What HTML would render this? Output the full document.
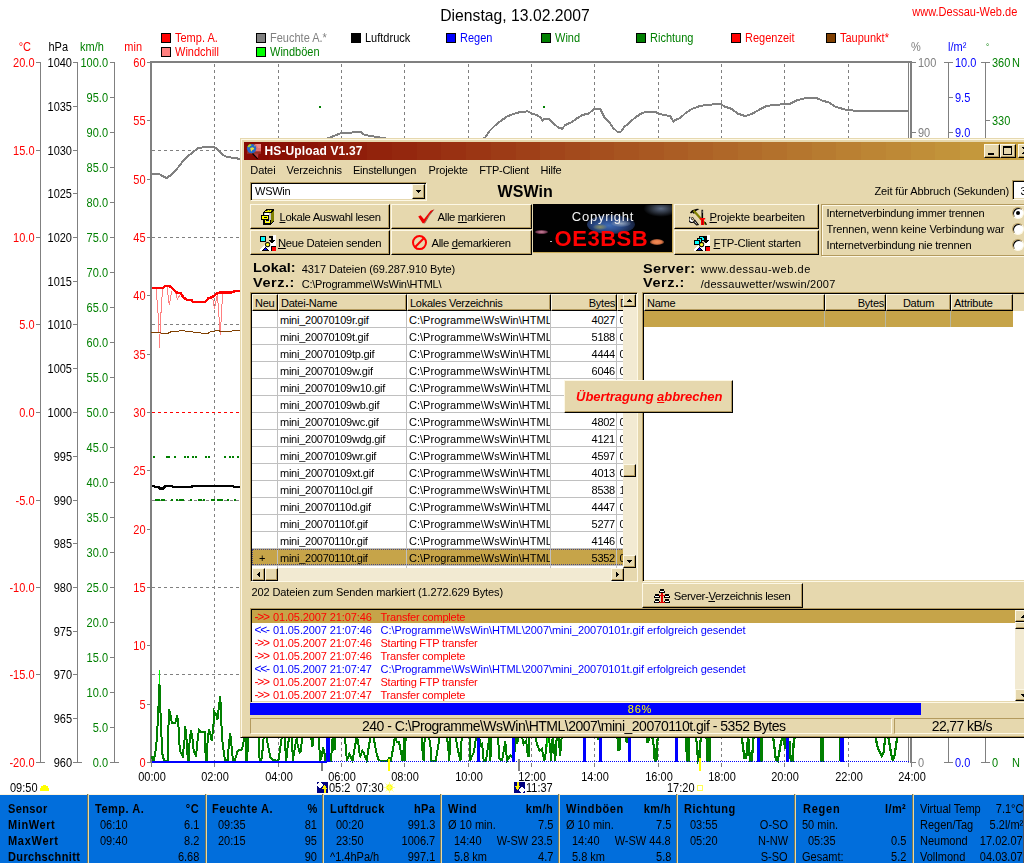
<!DOCTYPE html>
<html><head><meta charset="utf-8"><title>Dienstag, 13.02.2007</title>
<style>
html,body{margin:0;padding:0}
html{background:#fff}
body{width:1024px;height:863px;position:relative;overflow:hidden;background:#fff;font-family:"Liberation Sans",sans-serif;font-size:11px;color:#000}
div,span{position:absolute;box-sizing:border-box;white-space:nowrap}
.ms{font-size:11px;letter-spacing:-0.25px}
.ar{font-size:11px}
.ch{font-size:12.5px;transform:scaleX(0.88)}
.vb{font-size:12.5px;font-weight:bold;transform:scaleX(1.16)}
.b{font-weight:bold}
.th{font-size:11.3px;letter-spacing:-0.3px}
u{text-decoration:underline}
#wrap{left:0;top:0;width:1024px;height:863px;opacity:0.999}
</style></head><body><div id="wrap">
<span class="ch" style="left:414.5px;top:5.5px;width:200px;text-align:center;line-height:20px;font-size:17px;transform:scaleX(0.925);transform-origin:50% 50%">Dienstag, 13.02.2007</span>
<span class="ch" style="right:7px;top:4.5px;line-height:14px;color:#ff0000;transform-origin:100% 50%">www.Dessau-Web.de</span>
<div style="left:161px;top:33px;width:10px;height:10px;background:#ff0000;border:1px solid #000"></div>
<span class="ch" style="left:174.8px;top:30.7px;line-height:14px;color:#ff0000;transform-origin:0 50%">Temp. A.</span>
<div style="left:161px;top:47px;width:10px;height:10px;background:#ff8080;border:1px solid #000"></div>
<span class="ch" style="left:174.8px;top:44.7px;line-height:14px;color:#ff0000;transform-origin:0 50%">Windchill</span>
<div style="left:256px;top:33px;width:10px;height:10px;background:#808080;border:1px solid #000"></div>
<span class="ch" style="left:269.8px;top:30.7px;line-height:14px;color:#808080;transform-origin:0 50%">Feuchte A.*</span>
<div style="left:256px;top:47px;width:10px;height:10px;background:#00ff00;border:1px solid #000"></div>
<span class="ch" style="left:269.8px;top:44.7px;line-height:14px;color:#008000;transform-origin:0 50%">Windb&ouml;en</span>
<div style="left:351px;top:33px;width:10px;height:10px;background:#000000;border:1px solid #000"></div>
<span class="ch" style="left:364.8px;top:30.7px;line-height:14px;color:#000000;transform-origin:0 50%">Luftdruck</span>
<div style="left:446px;top:33px;width:10px;height:10px;background:#0000ff;border:1px solid #000"></div>
<span class="ch" style="left:459.8px;top:30.7px;line-height:14px;color:#0000ff;transform-origin:0 50%">Regen</span>
<div style="left:541px;top:33px;width:10px;height:10px;background:#008000;border:1px solid #000"></div>
<span class="ch" style="left:554.8px;top:30.7px;line-height:14px;color:#008000;transform-origin:0 50%">Wind</span>
<div style="left:636px;top:33px;width:10px;height:10px;background:#008000;border:1px solid #000"></div>
<span class="ch" style="left:649.8px;top:30.7px;line-height:14px;color:#008000;transform-origin:0 50%">Richtung</span>
<div style="left:731px;top:33px;width:10px;height:10px;background:#ff0000;border:1px solid #000"></div>
<span class="ch" style="left:744.8px;top:30.7px;line-height:14px;color:#ff0000;transform-origin:0 50%">Regenzeit</span>
<div style="left:826px;top:33px;width:10px;height:10px;background:#804000;border:1px solid #000"></div>
<span class="ch" style="left:839.8px;top:30.7px;line-height:14px;color:#ff0000;transform-origin:0 50%">Taupunkt*</span>
<svg width="1024" height="863" viewBox="0 0 1024 863" style="position:absolute;left:0;top:0" font-family="Liberation Sans, sans-serif" shape-rendering="crispEdges">
<line x1="214.5" y1="64" x2="214.5" y2="761" stroke="#808080" stroke-width="1" stroke-dasharray="3 3"/>
<line x1="278.5" y1="64" x2="278.5" y2="761" stroke="#808080" stroke-width="1" stroke-dasharray="3 3"/>
<line x1="341.5" y1="64" x2="341.5" y2="761" stroke="#808080" stroke-width="1" stroke-dasharray="3 3"/>
<line x1="404.5" y1="64" x2="404.5" y2="761" stroke="#808080" stroke-width="1" stroke-dasharray="3 3"/>
<line x1="468.5" y1="64" x2="468.5" y2="761" stroke="#808080" stroke-width="1" stroke-dasharray="3 3"/>
<line x1="531.5" y1="64" x2="531.5" y2="761" stroke="#808080" stroke-width="1" stroke-dasharray="3 3"/>
<line x1="594.5" y1="64" x2="594.5" y2="761" stroke="#808080" stroke-width="1" stroke-dasharray="3 3"/>
<line x1="658.5" y1="64" x2="658.5" y2="761" stroke="#808080" stroke-width="1" stroke-dasharray="3 3"/>
<line x1="721.5" y1="64" x2="721.5" y2="761" stroke="#808080" stroke-width="1" stroke-dasharray="3 3"/>
<line x1="784.5" y1="64" x2="784.5" y2="761" stroke="#808080" stroke-width="1" stroke-dasharray="3 3"/>
<line x1="848.5" y1="64" x2="848.5" y2="761" stroke="#808080" stroke-width="1" stroke-dasharray="3 3"/>
<line x1="152" y1="150.5" x2="908" y2="150.5" stroke="#808080" stroke-width="1" stroke-dasharray="3 3"/>
<line x1="152" y1="237.5" x2="908" y2="237.5" stroke="#808080" stroke-width="1" stroke-dasharray="3 3"/>
<line x1="152" y1="324.5" x2="908" y2="324.5" stroke="#808080" stroke-width="1" stroke-dasharray="3 3"/>
<line x1="152" y1="412.5" x2="908" y2="412.5" stroke="#ff0000" stroke-width="1" stroke-dasharray="3 3"/>
<line x1="152" y1="500.5" x2="908" y2="500.5" stroke="#808080" stroke-width="1" stroke-dasharray="3 3"/>
<line x1="152" y1="587.5" x2="908" y2="587.5" stroke="#808080" stroke-width="1" stroke-dasharray="3 3"/>
<line x1="152" y1="674.5" x2="908" y2="674.5" stroke="#808080" stroke-width="1" stroke-dasharray="3 3"/>
<line x1="40.5" y1="62" x2="40.5" y2="763" stroke="#808080" stroke-width="1" />
<line x1="36" y1="62.5" x2="41" y2="62.5" stroke="#808080" stroke-width="1" />
<text transform="translate(34.5 66.9) scale(0.88 1)" fill="#ff0000" text-anchor="end" font-size="12.5" >20.0</text>
<line x1="36" y1="150.5" x2="41" y2="150.5" stroke="#808080" stroke-width="1" />
<text transform="translate(34.5 154.9) scale(0.88 1)" fill="#ff0000" text-anchor="end" font-size="12.5" >15.0</text>
<line x1="36" y1="237.5" x2="41" y2="237.5" stroke="#808080" stroke-width="1" />
<text transform="translate(34.5 241.9) scale(0.88 1)" fill="#ff0000" text-anchor="end" font-size="12.5" >10.0</text>
<line x1="36" y1="324.5" x2="41" y2="324.5" stroke="#808080" stroke-width="1" />
<text transform="translate(34.5 328.9) scale(0.88 1)" fill="#ff0000" text-anchor="end" font-size="12.5" >5.0</text>
<line x1="36" y1="412.5" x2="41" y2="412.5" stroke="#808080" stroke-width="1" />
<text transform="translate(34.5 416.9) scale(0.88 1)" fill="#ff0000" text-anchor="end" font-size="12.5" >0.0</text>
<line x1="36" y1="500.5" x2="41" y2="500.5" stroke="#808080" stroke-width="1" />
<text transform="translate(34.5 504.9) scale(0.88 1)" fill="#ff0000" text-anchor="end" font-size="12.5" >-5.0</text>
<line x1="36" y1="587.5" x2="41" y2="587.5" stroke="#808080" stroke-width="1" />
<text transform="translate(34.5 591.9) scale(0.88 1)" fill="#ff0000" text-anchor="end" font-size="12.5" >-10.0</text>
<line x1="36" y1="674.5" x2="41" y2="674.5" stroke="#808080" stroke-width="1" />
<text transform="translate(34.5 678.9) scale(0.88 1)" fill="#ff0000" text-anchor="end" font-size="12.5" >-15.0</text>
<line x1="36" y1="762.5" x2="45" y2="762.5" stroke="#808080" stroke-width="1" />
<text transform="translate(34.5 766.9) scale(0.88 1)" fill="#ff0000" text-anchor="end" font-size="12.5" >-20.0</text>
<line x1="77.5" y1="62" x2="77.5" y2="763" stroke="#808080" stroke-width="1" />
<line x1="73" y1="62.5" x2="78" y2="62.5" stroke="#808080" stroke-width="1" />
<text transform="translate(72 66.9) scale(0.88 1)" fill="#000000" text-anchor="end" font-size="12.5" >1040</text>
<line x1="73" y1="106.5" x2="78" y2="106.5" stroke="#808080" stroke-width="1" />
<text transform="translate(72 110.9) scale(0.88 1)" fill="#000000" text-anchor="end" font-size="12.5" >1035</text>
<line x1="73" y1="150.5" x2="78" y2="150.5" stroke="#808080" stroke-width="1" />
<text transform="translate(72 154.9) scale(0.88 1)" fill="#000000" text-anchor="end" font-size="12.5" >1030</text>
<line x1="73" y1="193.5" x2="78" y2="193.5" stroke="#808080" stroke-width="1" />
<text transform="translate(72 197.9) scale(0.88 1)" fill="#000000" text-anchor="end" font-size="12.5" >1025</text>
<line x1="73" y1="237.5" x2="78" y2="237.5" stroke="#808080" stroke-width="1" />
<text transform="translate(72 241.9) scale(0.88 1)" fill="#000000" text-anchor="end" font-size="12.5" >1020</text>
<line x1="73" y1="281.5" x2="78" y2="281.5" stroke="#808080" stroke-width="1" />
<text transform="translate(72 285.9) scale(0.88 1)" fill="#000000" text-anchor="end" font-size="12.5" >1015</text>
<line x1="73" y1="324.5" x2="78" y2="324.5" stroke="#808080" stroke-width="1" />
<text transform="translate(72 328.9) scale(0.88 1)" fill="#000000" text-anchor="end" font-size="12.5" >1010</text>
<line x1="73" y1="368.5" x2="78" y2="368.5" stroke="#808080" stroke-width="1" />
<text transform="translate(72 372.9) scale(0.88 1)" fill="#000000" text-anchor="end" font-size="12.5" >1005</text>
<line x1="73" y1="412.5" x2="78" y2="412.5" stroke="#808080" stroke-width="1" />
<text transform="translate(72 416.9) scale(0.88 1)" fill="#000000" text-anchor="end" font-size="12.5" >1000</text>
<line x1="73" y1="456.5" x2="78" y2="456.5" stroke="#808080" stroke-width="1" />
<text transform="translate(72 460.9) scale(0.88 1)" fill="#000000" text-anchor="end" font-size="12.5" >995</text>
<line x1="73" y1="500.5" x2="78" y2="500.5" stroke="#808080" stroke-width="1" />
<text transform="translate(72 504.9) scale(0.88 1)" fill="#000000" text-anchor="end" font-size="12.5" >990</text>
<line x1="73" y1="543.5" x2="78" y2="543.5" stroke="#808080" stroke-width="1" />
<text transform="translate(72 547.9) scale(0.88 1)" fill="#000000" text-anchor="end" font-size="12.5" >985</text>
<line x1="73" y1="587.5" x2="78" y2="587.5" stroke="#808080" stroke-width="1" />
<text transform="translate(72 591.9) scale(0.88 1)" fill="#000000" text-anchor="end" font-size="12.5" >980</text>
<line x1="73" y1="631.5" x2="78" y2="631.5" stroke="#808080" stroke-width="1" />
<text transform="translate(72 635.9) scale(0.88 1)" fill="#000000" text-anchor="end" font-size="12.5" >975</text>
<line x1="73" y1="674.5" x2="78" y2="674.5" stroke="#808080" stroke-width="1" />
<text transform="translate(72 678.9) scale(0.88 1)" fill="#000000" text-anchor="end" font-size="12.5" >970</text>
<line x1="73" y1="718.5" x2="78" y2="718.5" stroke="#808080" stroke-width="1" />
<text transform="translate(72 722.9) scale(0.88 1)" fill="#000000" text-anchor="end" font-size="12.5" >965</text>
<line x1="73" y1="762.5" x2="82" y2="762.5" stroke="#808080" stroke-width="1" />
<text transform="translate(72 766.9) scale(0.88 1)" fill="#000000" text-anchor="end" font-size="12.5" >960</text>
<line x1="114.5" y1="62" x2="114.5" y2="763" stroke="#808080" stroke-width="1" />
<line x1="110" y1="62.5" x2="115" y2="62.5" stroke="#808080" stroke-width="1" />
<text transform="translate(108 66.9) scale(0.88 1)" fill="#008000" text-anchor="end" font-size="12.5" >100.0</text>
<line x1="110" y1="97.5" x2="115" y2="97.5" stroke="#808080" stroke-width="1" />
<text transform="translate(108 101.9) scale(0.88 1)" fill="#008000" text-anchor="end" font-size="12.5" >95.0</text>
<line x1="110" y1="132.5" x2="115" y2="132.5" stroke="#808080" stroke-width="1" />
<text transform="translate(108 136.9) scale(0.88 1)" fill="#008000" text-anchor="end" font-size="12.5" >90.0</text>
<line x1="110" y1="167.5" x2="115" y2="167.5" stroke="#808080" stroke-width="1" />
<text transform="translate(108 171.9) scale(0.88 1)" fill="#008000" text-anchor="end" font-size="12.5" >85.0</text>
<line x1="110" y1="202.5" x2="115" y2="202.5" stroke="#808080" stroke-width="1" />
<text transform="translate(108 206.9) scale(0.88 1)" fill="#008000" text-anchor="end" font-size="12.5" >80.0</text>
<line x1="110" y1="237.5" x2="115" y2="237.5" stroke="#808080" stroke-width="1" />
<text transform="translate(108 241.9) scale(0.88 1)" fill="#008000" text-anchor="end" font-size="12.5" >75.0</text>
<line x1="110" y1="272.5" x2="115" y2="272.5" stroke="#808080" stroke-width="1" />
<text transform="translate(108 276.9) scale(0.88 1)" fill="#008000" text-anchor="end" font-size="12.5" >70.0</text>
<line x1="110" y1="307.5" x2="115" y2="307.5" stroke="#808080" stroke-width="1" />
<text transform="translate(108 311.9) scale(0.88 1)" fill="#008000" text-anchor="end" font-size="12.5" >65.0</text>
<line x1="110" y1="342.5" x2="115" y2="342.5" stroke="#808080" stroke-width="1" />
<text transform="translate(108 346.9) scale(0.88 1)" fill="#008000" text-anchor="end" font-size="12.5" >60.0</text>
<line x1="110" y1="377.5" x2="115" y2="377.5" stroke="#808080" stroke-width="1" />
<text transform="translate(108 381.9) scale(0.88 1)" fill="#008000" text-anchor="end" font-size="12.5" >55.0</text>
<line x1="110" y1="412.5" x2="115" y2="412.5" stroke="#808080" stroke-width="1" />
<text transform="translate(108 416.9) scale(0.88 1)" fill="#008000" text-anchor="end" font-size="12.5" >50.0</text>
<line x1="110" y1="447.5" x2="115" y2="447.5" stroke="#808080" stroke-width="1" />
<text transform="translate(108 451.9) scale(0.88 1)" fill="#008000" text-anchor="end" font-size="12.5" >45.0</text>
<line x1="110" y1="482.5" x2="115" y2="482.5" stroke="#808080" stroke-width="1" />
<text transform="translate(108 486.9) scale(0.88 1)" fill="#008000" text-anchor="end" font-size="12.5" >40.0</text>
<line x1="110" y1="517.5" x2="115" y2="517.5" stroke="#808080" stroke-width="1" />
<text transform="translate(108 521.9) scale(0.88 1)" fill="#008000" text-anchor="end" font-size="12.5" >35.0</text>
<line x1="110" y1="552.5" x2="115" y2="552.5" stroke="#808080" stroke-width="1" />
<text transform="translate(108 556.9) scale(0.88 1)" fill="#008000" text-anchor="end" font-size="12.5" >30.0</text>
<line x1="110" y1="587.5" x2="115" y2="587.5" stroke="#808080" stroke-width="1" />
<text transform="translate(108 591.9) scale(0.88 1)" fill="#008000" text-anchor="end" font-size="12.5" >25.0</text>
<line x1="110" y1="622.5" x2="115" y2="622.5" stroke="#808080" stroke-width="1" />
<text transform="translate(108 626.9) scale(0.88 1)" fill="#008000" text-anchor="end" font-size="12.5" >20.0</text>
<line x1="110" y1="657.5" x2="115" y2="657.5" stroke="#808080" stroke-width="1" />
<text transform="translate(108 661.9) scale(0.88 1)" fill="#008000" text-anchor="end" font-size="12.5" >15.0</text>
<line x1="110" y1="692.5" x2="115" y2="692.5" stroke="#808080" stroke-width="1" />
<text transform="translate(108 696.9) scale(0.88 1)" fill="#008000" text-anchor="end" font-size="12.5" >10.0</text>
<line x1="110" y1="727.5" x2="115" y2="727.5" stroke="#808080" stroke-width="1" />
<text transform="translate(108 731.9) scale(0.88 1)" fill="#008000" text-anchor="end" font-size="12.5" >5.0</text>
<line x1="110" y1="762.5" x2="119" y2="762.5" stroke="#808080" stroke-width="1" />
<text transform="translate(108 766.9) scale(0.88 1)" fill="#008000" text-anchor="end" font-size="12.5" >0.0</text>
<line x1="147" y1="62.5" x2="151" y2="62.5" stroke="#808080" stroke-width="1" />
<text transform="translate(145.5 66.9) scale(0.88 1)" fill="#ff0000" text-anchor="end" font-size="12.5" >60</text>
<line x1="147" y1="120.5" x2="151" y2="120.5" stroke="#808080" stroke-width="1" />
<text transform="translate(145.5 124.9) scale(0.88 1)" fill="#ff0000" text-anchor="end" font-size="12.5" >55</text>
<line x1="147" y1="179.5" x2="151" y2="179.5" stroke="#808080" stroke-width="1" />
<text transform="translate(145.5 183.9) scale(0.88 1)" fill="#ff0000" text-anchor="end" font-size="12.5" >50</text>
<line x1="147" y1="237.5" x2="151" y2="237.5" stroke="#808080" stroke-width="1" />
<text transform="translate(145.5 241.9) scale(0.88 1)" fill="#ff0000" text-anchor="end" font-size="12.5" >45</text>
<line x1="147" y1="295.5" x2="151" y2="295.5" stroke="#808080" stroke-width="1" />
<text transform="translate(145.5 299.9) scale(0.88 1)" fill="#ff0000" text-anchor="end" font-size="12.5" >40</text>
<line x1="147" y1="354.5" x2="151" y2="354.5" stroke="#808080" stroke-width="1" />
<text transform="translate(145.5 358.9) scale(0.88 1)" fill="#ff0000" text-anchor="end" font-size="12.5" >35</text>
<line x1="147" y1="412.5" x2="151" y2="412.5" stroke="#808080" stroke-width="1" />
<text transform="translate(145.5 416.9) scale(0.88 1)" fill="#ff0000" text-anchor="end" font-size="12.5" >30</text>
<line x1="147" y1="470.5" x2="151" y2="470.5" stroke="#808080" stroke-width="1" />
<text transform="translate(145.5 474.9) scale(0.88 1)" fill="#ff0000" text-anchor="end" font-size="12.5" >25</text>
<line x1="147" y1="529.5" x2="151" y2="529.5" stroke="#808080" stroke-width="1" />
<text transform="translate(145.5 533.9) scale(0.88 1)" fill="#ff0000" text-anchor="end" font-size="12.5" >20</text>
<line x1="147" y1="587.5" x2="151" y2="587.5" stroke="#808080" stroke-width="1" />
<text transform="translate(145.5 591.9) scale(0.88 1)" fill="#ff0000" text-anchor="end" font-size="12.5" >15</text>
<line x1="147" y1="645.5" x2="151" y2="645.5" stroke="#808080" stroke-width="1" />
<text transform="translate(145.5 649.9) scale(0.88 1)" fill="#ff0000" text-anchor="end" font-size="12.5" >10</text>
<line x1="147" y1="704.5" x2="151" y2="704.5" stroke="#808080" stroke-width="1" />
<text transform="translate(145.5 708.9) scale(0.88 1)" fill="#ff0000" text-anchor="end" font-size="12.5" >5</text>
<line x1="147" y1="762.5" x2="151" y2="762.5" stroke="#808080" stroke-width="1" />
<text transform="translate(145.5 766.9) scale(0.88 1)" fill="#ff0000" text-anchor="end" font-size="12.5" >0</text>
<rect x="150" y="61" width="2" height="702" fill="#808080" />
<rect x="150" y="61" width="762" height="2" fill="#808080" />
<rect x="908" y="61" width="1" height="702" fill="#808080" />
<rect x="910" y="61" width="2" height="702" fill="#808080" />
<text transform="translate(31 51) scale(0.88 1)" fill="#ff0000" text-anchor="end" font-size="12.5" >&#176;C</text>
<text transform="translate(48.5 51) scale(0.88 1)" fill="#000000" text-anchor="start" font-size="12.5" >hPa</text>
<text transform="translate(80 51) scale(0.88 1)" fill="#008000" text-anchor="start" font-size="12.5" >km/h</text>
<text transform="translate(142 51) scale(0.88 1)" fill="#ff0000" text-anchor="end" font-size="12.5" >min</text>
<line x1="912" y1="62.5" x2="916" y2="62.5" stroke="#808080" stroke-width="1" />
<text transform="translate(918 66.9) scale(0.88 1)" fill="#808080" text-anchor="start" font-size="12.5" >100</text>
<line x1="912" y1="132.5" x2="916" y2="132.5" stroke="#808080" stroke-width="1" />
<text transform="translate(918 136.9) scale(0.88 1)" fill="#808080" text-anchor="start" font-size="12.5" >90</text>
<line x1="912" y1="202.5" x2="916" y2="202.5" stroke="#808080" stroke-width="1" />
<text transform="translate(918 206.9) scale(0.88 1)" fill="#808080" text-anchor="start" font-size="12.5" >80</text>
<line x1="912" y1="272.5" x2="916" y2="272.5" stroke="#808080" stroke-width="1" />
<text transform="translate(918 276.9) scale(0.88 1)" fill="#808080" text-anchor="start" font-size="12.5" >70</text>
<line x1="912" y1="342.5" x2="916" y2="342.5" stroke="#808080" stroke-width="1" />
<text transform="translate(918 346.9) scale(0.88 1)" fill="#808080" text-anchor="start" font-size="12.5" >60</text>
<line x1="912" y1="412.5" x2="916" y2="412.5" stroke="#808080" stroke-width="1" />
<text transform="translate(918 416.9) scale(0.88 1)" fill="#808080" text-anchor="start" font-size="12.5" >50</text>
<line x1="912" y1="482.5" x2="916" y2="482.5" stroke="#808080" stroke-width="1" />
<text transform="translate(918 486.9) scale(0.88 1)" fill="#808080" text-anchor="start" font-size="12.5" >40</text>
<line x1="912" y1="552.5" x2="916" y2="552.5" stroke="#808080" stroke-width="1" />
<text transform="translate(918 556.9) scale(0.88 1)" fill="#808080" text-anchor="start" font-size="12.5" >30</text>
<line x1="912" y1="622.5" x2="916" y2="622.5" stroke="#808080" stroke-width="1" />
<text transform="translate(918 626.9) scale(0.88 1)" fill="#808080" text-anchor="start" font-size="12.5" >20</text>
<line x1="912" y1="692.5" x2="916" y2="692.5" stroke="#808080" stroke-width="1" />
<text transform="translate(918 696.9) scale(0.88 1)" fill="#808080" text-anchor="start" font-size="12.5" >10</text>
<line x1="912" y1="762.5" x2="916" y2="762.5" stroke="#808080" stroke-width="1" />
<text transform="translate(918 766.9) scale(0.88 1)" fill="#808080" text-anchor="start" font-size="12.5" >0</text>
<text transform="translate(911 50.6) scale(0.88 1)" fill="#808080" text-anchor="start" font-size="12.5" >%</text>
<line x1="948.5" y1="62" x2="948.5" y2="763" stroke="#808080" stroke-width="1" />
<line x1="944" y1="62.5" x2="953" y2="62.5" stroke="#808080" stroke-width="1" />
<text transform="translate(955 66.9) scale(0.88 1)" fill="#0000ff" text-anchor="start" font-size="12.5" >10.0</text>
<line x1="948" y1="97.5" x2="953" y2="97.5" stroke="#808080" stroke-width="1" />
<text transform="translate(955 101.9) scale(0.88 1)" fill="#0000ff" text-anchor="start" font-size="12.5" >9.5</text>
<line x1="948" y1="132.5" x2="953" y2="132.5" stroke="#808080" stroke-width="1" />
<text transform="translate(955 136.9) scale(0.88 1)" fill="#0000ff" text-anchor="start" font-size="12.5" >9.0</text>
<line x1="948" y1="167.5" x2="953" y2="167.5" stroke="#808080" stroke-width="1" />
<text transform="translate(955 171.9) scale(0.88 1)" fill="#0000ff" text-anchor="start" font-size="12.5" >8.5</text>
<line x1="948" y1="202.5" x2="953" y2="202.5" stroke="#808080" stroke-width="1" />
<text transform="translate(955 206.9) scale(0.88 1)" fill="#0000ff" text-anchor="start" font-size="12.5" >8.0</text>
<line x1="948" y1="237.5" x2="953" y2="237.5" stroke="#808080" stroke-width="1" />
<text transform="translate(955 241.9) scale(0.88 1)" fill="#0000ff" text-anchor="start" font-size="12.5" >7.5</text>
<line x1="948" y1="272.5" x2="953" y2="272.5" stroke="#808080" stroke-width="1" />
<text transform="translate(955 276.9) scale(0.88 1)" fill="#0000ff" text-anchor="start" font-size="12.5" >7.0</text>
<line x1="948" y1="307.5" x2="953" y2="307.5" stroke="#808080" stroke-width="1" />
<text transform="translate(955 311.9) scale(0.88 1)" fill="#0000ff" text-anchor="start" font-size="12.5" >6.5</text>
<line x1="948" y1="342.5" x2="953" y2="342.5" stroke="#808080" stroke-width="1" />
<text transform="translate(955 346.9) scale(0.88 1)" fill="#0000ff" text-anchor="start" font-size="12.5" >6.0</text>
<line x1="948" y1="377.5" x2="953" y2="377.5" stroke="#808080" stroke-width="1" />
<text transform="translate(955 381.9) scale(0.88 1)" fill="#0000ff" text-anchor="start" font-size="12.5" >5.5</text>
<line x1="948" y1="412.5" x2="953" y2="412.5" stroke="#808080" stroke-width="1" />
<text transform="translate(955 416.9) scale(0.88 1)" fill="#0000ff" text-anchor="start" font-size="12.5" >5.0</text>
<line x1="948" y1="447.5" x2="953" y2="447.5" stroke="#808080" stroke-width="1" />
<text transform="translate(955 451.9) scale(0.88 1)" fill="#0000ff" text-anchor="start" font-size="12.5" >4.5</text>
<line x1="948" y1="482.5" x2="953" y2="482.5" stroke="#808080" stroke-width="1" />
<text transform="translate(955 486.9) scale(0.88 1)" fill="#0000ff" text-anchor="start" font-size="12.5" >4.0</text>
<line x1="948" y1="517.5" x2="953" y2="517.5" stroke="#808080" stroke-width="1" />
<text transform="translate(955 521.9) scale(0.88 1)" fill="#0000ff" text-anchor="start" font-size="12.5" >3.5</text>
<line x1="948" y1="552.5" x2="953" y2="552.5" stroke="#808080" stroke-width="1" />
<text transform="translate(955 556.9) scale(0.88 1)" fill="#0000ff" text-anchor="start" font-size="12.5" >3.0</text>
<line x1="948" y1="587.5" x2="953" y2="587.5" stroke="#808080" stroke-width="1" />
<text transform="translate(955 591.9) scale(0.88 1)" fill="#0000ff" text-anchor="start" font-size="12.5" >2.5</text>
<line x1="948" y1="622.5" x2="953" y2="622.5" stroke="#808080" stroke-width="1" />
<text transform="translate(955 626.9) scale(0.88 1)" fill="#0000ff" text-anchor="start" font-size="12.5" >2.0</text>
<line x1="948" y1="657.5" x2="953" y2="657.5" stroke="#808080" stroke-width="1" />
<text transform="translate(955 661.9) scale(0.88 1)" fill="#0000ff" text-anchor="start" font-size="12.5" >1.5</text>
<line x1="948" y1="692.5" x2="953" y2="692.5" stroke="#808080" stroke-width="1" />
<text transform="translate(955 696.9) scale(0.88 1)" fill="#0000ff" text-anchor="start" font-size="12.5" >1.0</text>
<line x1="948" y1="727.5" x2="953" y2="727.5" stroke="#808080" stroke-width="1" />
<text transform="translate(955 731.9) scale(0.88 1)" fill="#0000ff" text-anchor="start" font-size="12.5" >0.5</text>
<line x1="944" y1="762.5" x2="953" y2="762.5" stroke="#808080" stroke-width="1" />
<text transform="translate(955 766.9) scale(0.88 1)" fill="#0000ff" text-anchor="start" font-size="12.5" >0.0</text>
<text transform="translate(948 50.8) scale(0.88 1)" fill="#0000ff" text-anchor="start" font-size="12.5" >l/m&#178;</text>
<line x1="985.5" y1="62" x2="985.5" y2="763" stroke="#808080" stroke-width="1" />
<line x1="981" y1="62.5" x2="990" y2="62.5" stroke="#808080" stroke-width="1" />
<text transform="translate(992 66.9) scale(0.88 1)" fill="#008000" text-anchor="start" font-size="12.5" >360</text>
<text transform="translate(1012 66.9) scale(0.88 1)" fill="#008000" text-anchor="start" font-size="12.5" >N</text>
<line x1="985" y1="120.5" x2="990" y2="120.5" stroke="#808080" stroke-width="1" />
<text transform="translate(992 124.9) scale(0.88 1)" fill="#008000" text-anchor="start" font-size="12.5" >330</text>
<line x1="985" y1="179.5" x2="990" y2="179.5" stroke="#808080" stroke-width="1" />
<text transform="translate(992 183.9) scale(0.88 1)" fill="#008000" text-anchor="start" font-size="12.5" >300</text>
<line x1="985" y1="237.5" x2="990" y2="237.5" stroke="#808080" stroke-width="1" />
<text transform="translate(992 241.9) scale(0.88 1)" fill="#008000" text-anchor="start" font-size="12.5" >270</text>
<text transform="translate(1012 241.9) scale(0.88 1)" fill="#008000" text-anchor="start" font-size="12.5" >W</text>
<line x1="985" y1="295.5" x2="990" y2="295.5" stroke="#808080" stroke-width="1" />
<text transform="translate(992 299.9) scale(0.88 1)" fill="#008000" text-anchor="start" font-size="12.5" >240</text>
<line x1="985" y1="354.5" x2="990" y2="354.5" stroke="#808080" stroke-width="1" />
<text transform="translate(992 358.9) scale(0.88 1)" fill="#008000" text-anchor="start" font-size="12.5" >210</text>
<line x1="985" y1="412.5" x2="990" y2="412.5" stroke="#808080" stroke-width="1" />
<text transform="translate(992 416.9) scale(0.88 1)" fill="#008000" text-anchor="start" font-size="12.5" >180</text>
<text transform="translate(1012 416.9) scale(0.88 1)" fill="#008000" text-anchor="start" font-size="12.5" >S</text>
<line x1="985" y1="470.5" x2="990" y2="470.5" stroke="#808080" stroke-width="1" />
<text transform="translate(992 474.9) scale(0.88 1)" fill="#008000" text-anchor="start" font-size="12.5" >150</text>
<line x1="985" y1="529.5" x2="990" y2="529.5" stroke="#808080" stroke-width="1" />
<text transform="translate(992 533.9) scale(0.88 1)" fill="#008000" text-anchor="start" font-size="12.5" >120</text>
<line x1="985" y1="587.5" x2="990" y2="587.5" stroke="#808080" stroke-width="1" />
<text transform="translate(992 591.9) scale(0.88 1)" fill="#008000" text-anchor="start" font-size="12.5" >90</text>
<text transform="translate(1012 591.9) scale(0.88 1)" fill="#008000" text-anchor="start" font-size="12.5" >O</text>
<line x1="985" y1="645.5" x2="990" y2="645.5" stroke="#808080" stroke-width="1" />
<text transform="translate(992 649.9) scale(0.88 1)" fill="#008000" text-anchor="start" font-size="12.5" >60</text>
<line x1="985" y1="704.5" x2="990" y2="704.5" stroke="#808080" stroke-width="1" />
<text transform="translate(992 708.9) scale(0.88 1)" fill="#008000" text-anchor="start" font-size="12.5" >30</text>
<line x1="981" y1="762.5" x2="990" y2="762.5" stroke="#808080" stroke-width="1" />
<text transform="translate(992 766.9) scale(0.88 1)" fill="#008000" text-anchor="start" font-size="12.5" >0</text>
<text transform="translate(1012 766.9) scale(0.88 1)" fill="#008000" text-anchor="start" font-size="12.5" >N</text>
<text transform="translate(986 49.5) scale(0.88 1)" fill="#008000" text-anchor="start" font-size="9" >&#176;</text>
<line x1="151.5" y1="763" x2="151.5" y2="767" stroke="#808080" stroke-width="1" />
<text transform="translate(152 781) scale(0.88 1)" fill="#000000" text-anchor="middle" font-size="12.5" >00:00</text>
<line x1="214.5" y1="763" x2="214.5" y2="767" stroke="#808080" stroke-width="1" />
<text transform="translate(215 781) scale(0.88 1)" fill="#000000" text-anchor="middle" font-size="12.5" >02:00</text>
<line x1="278.5" y1="763" x2="278.5" y2="767" stroke="#808080" stroke-width="1" />
<text transform="translate(279 781) scale(0.88 1)" fill="#000000" text-anchor="middle" font-size="12.5" >04:00</text>
<line x1="341.5" y1="763" x2="341.5" y2="767" stroke="#808080" stroke-width="1" />
<text transform="translate(342 781) scale(0.88 1)" fill="#000000" text-anchor="middle" font-size="12.5" >06:00</text>
<line x1="404.5" y1="763" x2="404.5" y2="767" stroke="#808080" stroke-width="1" />
<text transform="translate(405 781) scale(0.88 1)" fill="#000000" text-anchor="middle" font-size="12.5" >08:00</text>
<line x1="468.5" y1="763" x2="468.5" y2="767" stroke="#808080" stroke-width="1" />
<text transform="translate(469 781) scale(0.88 1)" fill="#000000" text-anchor="middle" font-size="12.5" >10:00</text>
<line x1="531.5" y1="763" x2="531.5" y2="767" stroke="#808080" stroke-width="1" />
<text transform="translate(532 781) scale(0.88 1)" fill="#000000" text-anchor="middle" font-size="12.5" >12:00</text>
<line x1="594.5" y1="763" x2="594.5" y2="767" stroke="#808080" stroke-width="1" />
<text transform="translate(595 781) scale(0.88 1)" fill="#000000" text-anchor="middle" font-size="12.5" >14:00</text>
<line x1="658.5" y1="763" x2="658.5" y2="767" stroke="#808080" stroke-width="1" />
<text transform="translate(659 781) scale(0.88 1)" fill="#000000" text-anchor="middle" font-size="12.5" >16:00</text>
<line x1="721.5" y1="763" x2="721.5" y2="767" stroke="#808080" stroke-width="1" />
<text transform="translate(722 781) scale(0.88 1)" fill="#000000" text-anchor="middle" font-size="12.5" >18:00</text>
<line x1="784.5" y1="763" x2="784.5" y2="767" stroke="#808080" stroke-width="1" />
<text transform="translate(785 781) scale(0.88 1)" fill="#000000" text-anchor="middle" font-size="12.5" >20:00</text>
<line x1="848.5" y1="763" x2="848.5" y2="767" stroke="#808080" stroke-width="1" />
<text transform="translate(849 781) scale(0.88 1)" fill="#000000" text-anchor="middle" font-size="12.5" >22:00</text>
<line x1="911.5" y1="763" x2="911.5" y2="767" stroke="#808080" stroke-width="1" />
<text transform="translate(912 781) scale(0.88 1)" fill="#000000" text-anchor="middle" font-size="12.5" >24:00</text>
<polyline points="151.7,173.8 158.5,173.8 166.4,178.1 172.2,174.2 179,166.4 185,158.6 192.7,152.3 198.6,147.9 206.4,146.9 213.2,146.9 217.1,148.8 221,153.1 225,156.3 231.8,157.6 240.6,159 260,158 290,152 315,143 331.4,137 341.2,133.1 360.7,132 364.6,135 382,137.8 400,141 430,146 460,148 478,143 485.5,137 489.8,130.7 494.9,125.6 501.3,120.5 507.6,116.2 515.2,113.4 521.6,111.7 527.9,111.4 531.7,113.4 536.8,115 540.6,117.5 542.4,120.5 544.4,118.5 549,118.5 553.3,123.1 558.4,127.7 562.2,128.7 565.2,125.1 572.4,121.8 577.4,118 582.5,115 588.9,113.4 593.9,109.1 600.3,109.1 604.1,116.7 609.2,121.8 613,127.7 617.6,132 621.1,131.5 624.4,126.9 629.5,122.6 634.6,118 642.2,112.9 648.5,111.7 654.9,111.7 660,114.2 670.1,116 673.4,121.5 676.5,119.3 680.2,118 685.2,113.4 691.6,109.1 700.5,105.8 710.6,104.6 720.8,104 724.6,106.6 732.2,109.1 737.3,113.4 744.9,116 751.3,114.2 758.9,109.9 766.5,106 774.1,104.8 789.3,104 797,100.2 807.1,97.7 816,97.7 822.4,100.7 828.7,102.3 835.1,106.6 845.2,109.6 856.6,110.9 908,110.9" fill="none" stroke="#808080" stroke-width="2" />
<rect x="319" y="106" width="2" height="2" fill="#008000" />
<rect x="543" y="106" width="2" height="2" fill="#008000" />
<polyline points="156.2,289 158.5,319 159.5,347.6 160.6,319 162.5,289" fill="none" stroke="#ff8080" stroke-width="1" />
<polyline points="167,287.4 169.3,304.8 171.7,290.9" fill="none" stroke="#ff8080" stroke-width="1" />
<polyline points="175.7,293.2 177.4,299.5 179.8,294.9" fill="none" stroke="#ff8080" stroke-width="1" />
<polyline points="212.8,299 214.5,308.8 217.4,294.3" fill="none" stroke="#ff8080" stroke-width="1" />
<polyline points="217.4,294.9 220.3,334.9 222.6,293.2" fill="none" stroke="#ff8080" stroke-width="1" />
<polyline points="151.4,332.6 160.6,332.6 161.2,333.5 167.6,333.5 171.7,331.4 178.6,331.4 179.8,330.3 184.4,330.3 185.6,331.4 192.5,331.4 193.7,332.6 200.6,332.6 201.8,333.5 207.6,333.5 211,331.4 214.5,331.4 216.3,330.3 218.6,330.3 219.7,331.4 231.3,331.4 233,330.3 241,330.3" fill="none" stroke="#804000" stroke-width="1" />
<polyline points="152,288 163,288 165.3,285.9 169.3,285.9 172.8,288.5 176.9,292.6 180.9,293.2 183.2,297.2 186.7,299.9 191.3,299.9 193.1,301.9 205.3,301.9 208.2,298.4 212.2,297.2 216.3,293.8 219.2,292.6 231.3,292.6 234.8,291.1 241,291.1" fill="none" stroke="#ff0000" stroke-width="2.4" />
<rect x="153" y="456" width="2" height="2" fill="#008000" />
<rect x="166" y="456" width="4" height="2" fill="#008000" />
<rect x="174" y="456" width="2" height="2" fill="#008000" />
<rect x="184" y="456" width="2" height="2" fill="#008000" />
<rect x="187" y="456" width="2" height="2" fill="#008000" />
<rect x="192" y="456" width="2" height="2" fill="#008000" />
<rect x="195" y="456" width="2" height="2" fill="#008000" />
<rect x="205" y="456" width="2" height="2" fill="#008000" />
<rect x="208" y="456" width="2" height="2" fill="#008000" />
<rect x="224" y="456" width="2" height="2" fill="#008000" />
<rect x="229" y="456" width="2" height="2" fill="#008000" />
<rect x="232" y="456" width="2" height="2" fill="#008000" />
<rect x="237" y="456" width="2" height="2" fill="#008000" />
<rect x="155" y="499" width="5" height="2" fill="#008000" />
<rect x="161" y="499" width="4" height="2" fill="#008000" />
<rect x="171" y="499" width="2" height="2" fill="#008000" />
<rect x="176" y="499" width="2" height="2" fill="#008000" />
<rect x="179" y="499" width="5" height="2" fill="#008000" />
<rect x="190" y="499" width="2" height="2" fill="#008000" />
<rect x="198" y="499" width="4" height="2" fill="#008000" />
<rect x="203" y="499" width="2" height="2" fill="#008000" />
<rect x="211" y="499" width="4" height="2" fill="#008000" />
<rect x="217" y="499" width="6" height="2" fill="#008000" />
<rect x="227" y="499" width="2" height="2" fill="#008000" />
<rect x="234" y="499" width="2" height="2" fill="#008000" />
<polyline points="152,486.2 154.3,486.2 155.4,487.2 158.9,487.2 160,488.4 163,488.4 165.3,486.2 172.2,486.2 172.8,487.2 191.3,487.2 192.5,486.2 233,486.2 234.2,487.2 241,487.2" fill="none" stroke="#000000" stroke-width="2.4" />
<polyline points="151.4,756.5 153.7,760.6 155.4,751.9 156.6,741.5 157.7,722.4 158.7,703.2 159.5,684.1 160.3,707.9 161.2,731 162.4,754.2 164.1,760.6 167.6,760.6 168.2,734.5 169.1,709 170.5,714.8 171.9,722.9 175.4,722.9 177.2,714.8 178.6,727.6 179.8,750.7 182.7,756.5 184.4,741.5 185.3,726.4 186.5,739.2 187.9,760.6 189,760.6 189.6,740.3 191.1,729.9 192.5,739.2 193.7,750.7 196,756.5 197.7,739.2 198.9,729.9 200.6,731.6 204.7,731.6 205.3,747.3 205.8,760.6 207,760.6 207.6,740.3 209,729.3 210.5,734.5 211.6,740.9 213.4,726.4 214.2,711.3 216.3,714.8 217.4,720 219.2,704.4 220.3,696.3 221.2,718.3 222.1,739.2 225,760.6 226.1,760.6 227.9,760 228.7,746.1 230.2,732.8 231.3,743.8 233,760.6 234.8,760.6 237.7,750.7 241.2,749.6 242.2,749 244.6,736 246,736 246.3,760.6 247.1,760.6 248.3,736 258.8,736 259.6,760.6 261.3,760.6 262.9,747.3 263.7,736 266.2,736 270.4,757.3 273,760 277,760.6 278.7,758.9 282,736 284.5,736 286.2,760.6 287.8,745.6 289.5,736 292,736 292.8,760.6 295.3,745.6 297,736 297,742.3 299.5,752.3 301.1,750.6 302,736 311.1,736 312.4,747.3 313.1,736 318.6,736 320.2,760.6 321.9,755.6 323,747.3 324.4,752.3 325.2,760.6 327,760.6 331,760.6 332.7,736 333,736 333,749.8 334.7,749 335.2,736 344.3,736 346,747.3 346.8,760.6 349.3,753.9 352.6,760.6 354.3,750.6 356.8,736 358.4,744 360.1,757.3 362.3,750.6 364.2,753.9 366.7,760.6 369.2,744 370.9,736 373.4,736 375.9,750.6 378.4,759.7 380.9,761 387.5,761 389.2,759 390.8,760.6 393.3,747.3 395,736 396.6,741.5 399.1,742.3 401.6,755.6 402.5,761 404.1,744 404.4,736 404.8,760.6 405.7,736 421.4,736 422.3,749 423.6,760.6 424.8,736 428.9,736 430.6,747.3 431.4,760.6 435.6,760.6 437.2,752.3 439.7,736 446.4,736 448,744 449.2,760.6 450.5,736 455.5,736 458,750.6 460.5,760.6 461.8,736 469.6,736 470.4,760.6 472.1,755.6 473.8,752.3 476.3,736 479,736 480.4,745.6 482.1,744 483.7,760.6 486,760.6 489.5,736 490.4,760.6 491.2,736 497.9,736 499.5,758.9 502,760.6 505.3,741.5 507,760.6 510.3,755.6 512,757.3 514,757 516.1,736 517,744 519,736 521.9,736 523.6,744 526.1,740.6 527.8,755.6 529.4,755.6 529.4,736 535.2,736 536.9,744 539.4,750.6 541.9,749 544.4,760.6 546,750.6 547.2,736 548.5,736 550.2,747.3 551,760.6 552.7,736 555.2,760.6 556.8,736 558.5,736 560.1,755.6 561.8,736" fill="none" stroke="#008000" stroke-width="2" />
<polyline points="598.5,736 598.5,740" fill="none" stroke="#008000" stroke-width="2.2" />
<polyline points="617.5,736 618,750 619.5,749.5 619.8,736" fill="none" stroke="#008000" stroke-width="2.2" />
<polyline points="625.6,736 626.5,741.5 627.8,741.5 627.8,736" fill="none" stroke="#008000" stroke-width="2.2" />
<polyline points="646.4,736 646.9,741.5 648.4,741.5 648.9,736" fill="none" stroke="#008000" stroke-width="2.2" />
<polyline points="652.2,736 653.9,747.3 654.7,760.6 656.4,760.6 656.7,747.3 658,736" fill="none" stroke="#008000" stroke-width="2.2" />
<polyline points="686.3,736 686.8,760.6 688.8,760.6 689.3,736" fill="none" stroke="#008000" stroke-width="2.2" />
<polyline points="695.4,736 697.1,744 697.9,760.6 699.6,757.3 700.1,744 701.2,736" fill="none" stroke="#008000" stroke-width="2.2" />
<polyline points="706.5,736 707.5,760.6 709.5,760.6 710,736" fill="none" stroke="#008000" stroke-width="2.2" />
<polyline points="741.6,736 744.4,758.1 746.2,758.1 748.1,736 749,745 749.9,761 751.8,761 753.6,736" fill="none" stroke="#008000" stroke-width="2.2" />
<polyline points="760.5,736 761,761 762,761 762.3,736" fill="none" stroke="#008000" stroke-width="2.2" />
<polyline points="773.1,736 775.9,760 777.8,761 780.5,745 782.4,736 783.3,736 785.2,748.8 786.5,736" fill="none" stroke="#008000" stroke-width="2.2" />
<polyline points="789.8,741.4 790.7,761 793.2,761 793.5,743.3 795,736" fill="none" stroke="#008000" stroke-width="2.2" />
<polyline points="821,736 821.5,761 822.5,761 823,736" fill="none" stroke="#008000" stroke-width="2.2" />
<polyline points="839.8,736 839.8,761" fill="none" stroke="#008000" stroke-width="2.2" />
<polyline points="875.2,736 878,748.8 881.7,756.3 883.5,752.6 885.4,736" fill="none" stroke="#008000" stroke-width="2.2" />
<polyline points="888.2,736 890.9,752.6 892.8,761 894.7,754.4 897.4,736" fill="none" stroke="#008000" stroke-width="2.2" />
<rect x="617" y="738" width="3" height="13" fill="#008000" />
<rect x="686" y="738" width="3" height="23" fill="#008000" />
<rect x="707" y="738" width="3" height="23" fill="#008000" />
<rect x="820" y="738" width="3" height="23" fill="#008000" />
<rect x="654" y="748" width="3" height="13" fill="#008000" />
<rect x="159" y="670" width="1" height="14" fill="#00ff00" />
<rect x="547" y="738" width="1" height="9" fill="#00ff00" />
<rect x="152" y="761" width="175" height="2" fill="#0000ff" />
<line x1="330" y1="761.5" x2="909" y2="761.5" stroke="#0000ff" stroke-width="1" stroke-dasharray="1 1"/>
<rect x="326" y="738" width="4" height="24" fill="#0000ff" />
<rect x="477" y="738" width="3" height="24" fill="#0000ff" />
<rect x="512" y="738" width="3" height="24" fill="#0000ff" />
<rect x="583" y="738" width="3" height="24" fill="#0000ff" />
<rect x="599" y="738" width="3" height="24" fill="#0000ff" />
<rect x="628" y="738" width="3" height="24" fill="#0000ff" />
<rect x="675" y="738" width="3" height="24" fill="#0000ff" />
<rect x="757" y="738" width="3" height="24" fill="#0000ff" />
<rect x="786" y="738" width="3" height="24" fill="#0000ff" />
<rect x="840" y="738" width="4" height="24" fill="#0000ff" />
<rect x="321" y="763" width="2" height="8" fill="#808080" />
<rect x="518" y="759" width="2" height="12" fill="#808080" />
<rect x="388" y="759" width="2" height="12" fill="#ffff00" />
<rect x="388" y="757" width="2" height="2" fill="#008000" />
<rect x="699" y="758" width="2" height="13" fill="#ffff00" />
</svg>
<span class="ch" style="left:10px;top:780.7px;line-height:14px;;transform-origin:0 50%">09:50</span>
<svg style="position:absolute;left:40px;top:785px" width="9" height="6" shape-rendering="crispEdges"><path d="M0 6 L0 3 L1 3 L1 1 L3 1 L3 0 L6 0 L6 1 L8 1 L8 3 L9 3 L9 6 Z" fill="#ffff00"/></svg>
<svg style="position:absolute;left:317px;top:782px" width="11" height="11" shape-rendering="crispEdges"><rect width="11" height="11" fill="#000080"/><circle cx="3" cy="3" r="2.6" fill="#fff"/><path d="M7.5 3 L4.5 7 L6.5 7 L6.5 11 L8.5 11 L8.5 7 L10.5 7 Z" fill="#ffee00"/></svg>
<span class="ch" style="left:329px;top:780.7px;line-height:14px;;transform-origin:0 50%">05:2</span>
<span class="ch" style="left:356.3px;top:780.7px;line-height:14px;;transform-origin:0 50%">07:30</span>
<svg style="position:absolute;left:383.6px;top:782.3px" width="11" height="11"><circle cx="5.5" cy="5.5" r="3.2" fill="#ffff00"/><g stroke="#ffff70" stroke-width="0.8"><line x1="5.5" y1="0" x2="5.5" y2="11"/><line x1="0" y1="5.5" x2="11" y2="5.5"/><line x1="1.5" y1="1.5" x2="9.5" y2="9.5"/><line x1="9.5" y1="1.5" x2="1.5" y2="9.5"/></g></svg>
<svg style="position:absolute;left:514px;top:782px" width="11" height="11" shape-rendering="crispEdges"><rect width="11" height="11" fill="#000080"/><circle cx="8" cy="8" r="2.6" fill="#fff"/><path d="M3.5 8 L0.5 4 L2.5 4 L2.5 0 L4.5 0 L4.5 4 L6.5 4 Z" fill="#ffee00"/></svg>
<span class="ch" style="left:526px;top:780.7px;line-height:14px;;transform-origin:0 50%">11:37</span>
<span class="ch" style="left:667px;top:780.7px;line-height:14px;;transform-origin:0 50%">17:20</span>
<div style="left:697px;top:785px;width:6px;height:6px;border:1px solid #ffff50"></div>
<div style="left:0px;top:794px;width:1024px;height:1px;background:#FFF4DC"></div>
<div style="left:0px;top:795px;width:1024px;height:68px;background:#006EDC"></div>
<div style="left:87px;top:794px;width:1px;height:69px;background:#7a7a5a"></div>
<div style="left:88px;top:794px;width:1px;height:69px;background:#e8d9a0"></div>
<div style="left:205px;top:794px;width:1px;height:69px;background:#7a7a5a"></div>
<div style="left:206px;top:794px;width:1px;height:69px;background:#e8d9a0"></div>
<div style="left:322px;top:794px;width:1px;height:69px;background:#7a7a5a"></div>
<div style="left:323px;top:794px;width:1px;height:69px;background:#e8d9a0"></div>
<div style="left:440px;top:794px;width:1px;height:69px;background:#7a7a5a"></div>
<div style="left:441px;top:794px;width:1px;height:69px;background:#e8d9a0"></div>
<div style="left:558px;top:794px;width:1px;height:69px;background:#7a7a5a"></div>
<div style="left:559px;top:794px;width:1px;height:69px;background:#e8d9a0"></div>
<div style="left:676px;top:794px;width:1px;height:69px;background:#7a7a5a"></div>
<div style="left:677px;top:794px;width:1px;height:69px;background:#e8d9a0"></div>
<div style="left:794px;top:794px;width:1px;height:69px;background:#7a7a5a"></div>
<div style="left:795px;top:794px;width:1px;height:69px;background:#e8d9a0"></div>
<div style="left:912px;top:794px;width:1px;height:69px;background:#7a7a5a"></div>
<div style="left:913px;top:794px;width:1px;height:69px;background:#e8d9a0"></div>
<div style="left:1023px;top:795px;width:1px;height:68px;background:#4a5060"></div>
<span class="ch b" style="left:8px;top:801.8px;line-height:14px;;letter-spacing:0.435px;transform-origin:0 50%">Sensor</span>
<span class="ch b" style="left:8px;top:817.8px;line-height:14px;;letter-spacing:0.667px;transform-origin:0 50%">MinWert</span>
<span class="ch b" style="left:8px;top:833.8px;line-height:14px;;letter-spacing:0.803px;transform-origin:0 50%">MaxWert</span>
<span class="ch b" style="left:8px;top:849.8px;line-height:14px;;letter-spacing:0.412px;transform-origin:0 50%">Durchschnitt</span>
<span class="ch b" style="left:95px;top:801.8px;line-height:14px;;letter-spacing:0.577px;transform-origin:0 50%">Temp. A.</span>
<span class="ch b" style="right:825px;top:801.8px;line-height:14px;letter-spacing:0.5px;margin-right:-0.5px;transform-origin:100% 50%">&#176;C</span>
<span class="ch" style="left:100px;top:817.8px;line-height:14px;;transform-origin:0 50%">06:10</span>
<span class="ch" style="right:825px;top:817.8px;line-height:14px;;transform-origin:100% 50%">6.1</span>
<span class="ch" style="left:100px;top:833.8px;line-height:14px;;transform-origin:0 50%">09:40</span>
<span class="ch" style="right:825px;top:833.8px;line-height:14px;;transform-origin:100% 50%">8.2</span>
<span class="ch" style="right:825px;top:849.8px;line-height:14px;;transform-origin:100% 50%">6.68</span>
<span class="ch b" style="left:212.2px;top:801.8px;line-height:14px;;letter-spacing:0.610px;transform-origin:0 50%">Feuchte A.</span>
<span class="ch b" style="right:707px;top:801.8px;line-height:14px;letter-spacing:0.5px;margin-right:-0.5px;transform-origin:100% 50%">%</span>
<span class="ch" style="left:218px;top:817.8px;line-height:14px;;transform-origin:0 50%">09:35</span>
<span class="ch" style="right:707px;top:817.8px;line-height:14px;;transform-origin:100% 50%">81</span>
<span class="ch" style="left:218px;top:833.8px;line-height:14px;;transform-origin:0 50%">20:15</span>
<span class="ch" style="right:707px;top:833.8px;line-height:14px;;transform-origin:100% 50%">95</span>
<span class="ch" style="right:707px;top:849.8px;line-height:14px;;transform-origin:100% 50%">90</span>
<span class="ch b" style="left:329.8px;top:801.8px;line-height:14px;;letter-spacing:0.502px;transform-origin:0 50%">Luftdruck</span>
<span class="ch b" style="right:589px;top:801.8px;line-height:14px;letter-spacing:0.5px;margin-right:-0.5px;transform-origin:100% 50%">hPa</span>
<span class="ch" style="left:336px;top:817.8px;line-height:14px;;transform-origin:0 50%">00:20</span>
<span class="ch" style="right:589px;top:817.8px;line-height:14px;;transform-origin:100% 50%">991.3</span>
<span class="ch" style="left:336px;top:833.8px;line-height:14px;;transform-origin:0 50%">23:50</span>
<span class="ch" style="right:589px;top:833.8px;line-height:14px;;transform-origin:100% 50%">1006.7</span>
<span class="ch" style="left:330px;top:849.8px;line-height:14px;;transform-origin:0 50%">^1.4hPa/h</span>
<span class="ch" style="right:589px;top:849.8px;line-height:14px;;transform-origin:100% 50%">997.1</span>
<span class="ch b" style="left:447.7px;top:801.8px;line-height:14px;;letter-spacing:0.715px;transform-origin:0 50%">Wind</span>
<span class="ch b" style="right:471px;top:801.8px;line-height:14px;letter-spacing:0.5px;margin-right:-0.5px;transform-origin:100% 50%">km/h</span>
<span class="ch" style="left:448px;top:817.8px;line-height:14px;;transform-origin:0 50%">&Oslash; 10 min.</span>
<span class="ch" style="right:471px;top:817.8px;line-height:14px;;transform-origin:100% 50%">7.5</span>
<span class="ch" style="left:454px;top:833.8px;line-height:14px;;transform-origin:0 50%">14:40</span>
<span class="ch" style="right:471px;top:833.8px;line-height:14px;;transform-origin:100% 50%">W-SW 23.5</span>
<span class="ch" style="left:454px;top:849.8px;line-height:14px;;transform-origin:0 50%">5.8 km</span>
<span class="ch" style="right:471px;top:849.8px;line-height:14px;;transform-origin:100% 50%">4.7</span>
<span class="ch b" style="left:565.7px;top:801.8px;line-height:14px;;letter-spacing:0.673px;transform-origin:0 50%">Windb&ouml;en</span>
<span class="ch b" style="right:353px;top:801.8px;line-height:14px;letter-spacing:0.5px;margin-right:-0.5px;transform-origin:100% 50%">km/h</span>
<span class="ch" style="left:566px;top:817.8px;line-height:14px;;transform-origin:0 50%">&Oslash; 10 min.</span>
<span class="ch" style="right:353px;top:817.8px;line-height:14px;;transform-origin:100% 50%">7.5</span>
<span class="ch" style="left:572px;top:833.8px;line-height:14px;;transform-origin:0 50%">14:40</span>
<span class="ch" style="right:353px;top:833.8px;line-height:14px;;transform-origin:100% 50%">W-SW 44.8</span>
<span class="ch" style="left:572px;top:849.8px;line-height:14px;;transform-origin:0 50%">5.8 km</span>
<span class="ch" style="right:353px;top:849.8px;line-height:14px;;transform-origin:100% 50%">5.8</span>
<span class="ch b" style="left:684.2px;top:801.8px;line-height:14px;;letter-spacing:0.586px;transform-origin:0 50%">Richtung</span>
<span class="ch" style="left:690px;top:817.8px;line-height:14px;;transform-origin:0 50%">03:55</span>
<span class="ch" style="right:236px;top:817.8px;line-height:14px;;transform-origin:100% 50%">O-SO</span>
<span class="ch" style="left:690px;top:833.8px;line-height:14px;;transform-origin:0 50%">05:20</span>
<span class="ch" style="right:236px;top:833.8px;line-height:14px;;transform-origin:100% 50%">N-NW</span>
<span class="ch" style="right:236px;top:849.8px;line-height:14px;;transform-origin:100% 50%">S-SO</span>
<span class="ch b" style="left:802.5px;top:801.8px;line-height:14px;;letter-spacing:0.882px;transform-origin:0 50%">Regen</span>
<span class="ch b" style="right:118px;top:801.8px;line-height:14px;letter-spacing:0.5px;margin-right:-0.5px;transform-origin:100% 50%">l/m&#178;</span>
<span class="ch" style="left:802px;top:817.8px;line-height:14px;;transform-origin:0 50%">50 min.</span>
<span class="ch" style="left:808px;top:833.8px;line-height:14px;;transform-origin:0 50%">05:35</span>
<span class="ch" style="right:118px;top:833.8px;line-height:14px;;transform-origin:100% 50%">0.5</span>
<span class="ch" style="left:802px;top:849.8px;line-height:14px;;transform-origin:0 50%">Gesamt:</span>
<span class="ch" style="right:118px;top:849.8px;line-height:14px;;transform-origin:100% 50%">5.2</span>
<span class="ch" style="left:920px;top:801.8px;line-height:14px;;transform-origin:0 50%">Virtual Temp</span>
<span class="ch" style="right:1px;top:801.8px;line-height:14px;;transform-origin:100% 50%">7.1&#176;C</span>
<span class="ch" style="left:920px;top:817.8px;line-height:14px;;transform-origin:0 50%">Regen/Tag</span>
<span class="ch" style="right:1px;top:817.8px;line-height:14px;;transform-origin:100% 50%">5.2l/m&#178;</span>
<span class="ch" style="left:920px;top:833.8px;line-height:14px;;transform-origin:0 50%">Neumond</span>
<span class="ch" style="right:1px;top:833.8px;line-height:14px;;transform-origin:100% 50%">17.02.07</span>
<span class="ch" style="left:920px;top:849.8px;line-height:14px;;transform-origin:0 50%">Vollmond</span>
<span class="ch" style="right:1px;top:849.8px;line-height:14px;;transform-origin:100% 50%">04.03.07</span>
<div style="left:240px;top:138px;width:800px;height:600px;background:#E6D8AE;border:1px solid;border-color:#E6D8AE #000000 #000000 #E6D8AE;box-shadow:inset 1px 1px 0 #FDF8E6, inset -1px -1px 0 #B39A5E"></div>
<div style="left:244px;top:142px;width:790px;height:18px;background:linear-gradient(to right,#880a02 0.0px,#880a02 24.7px,#8a0f04 24.7px,#8a0f04 49.4px,#8c1406 49.4px,#8c1406 74.1px,#8e1908 74.1px,#8e1908 98.8px,#901e0a 98.8px,#901e0a 123.4px,#92230c 123.4px,#92230c 148.1px,#94270e 148.1px,#94270e 172.8px,#962c10 172.8px,#962c10 197.5px,#993112 197.5px,#993112 222.2px,#9b3614 222.2px,#9b3614 246.9px,#9d3b16 246.9px,#9d3b16 271.6px,#9f4018 271.6px,#9f4018 296.2px,#a1451a 296.2px,#a1451a 320.9px,#a34a1c 320.9px,#a34a1c 345.6px,#a54f1e 345.6px,#a54f1e 370.3px,#a75420 370.3px,#a75420 395.0px,#a95822 395.0px,#a95822 419.7px,#ab5d24 419.7px,#ab5d24 444.4px,#ad6226 444.4px,#ad6226 469.1px,#af6728 469.1px,#af6728 493.8px,#b16c2a 493.8px,#b16c2a 518.4px,#b3712c 518.4px,#b3712c 543.1px,#b5762e 543.1px,#b5762e 567.8px,#b77b30 567.8px,#b77b30 592.5px,#ba8032 592.5px,#ba8032 617.2px,#bc8534 617.2px,#bc8534 641.9px,#be8936 641.9px,#be8936 666.6px,#c08e38 666.6px,#c08e38 691.2px,#c2933a 691.2px,#c2933a 715.9px,#c4983c 715.9px,#c4983c 740.6px,#c69d3e 740.6px,#c69d3e 765.3px,#c8a240 765.3px,#c8a240 790.0px)"></div>
<svg style="position:absolute;left:246px;top:143px" width="16" height="17"><path d="M5 1 L15 1 L15 10.5 L12.5 10.5 L11.8 15.5 L7 10.5 L1 10.5 L1 8.5 L5 8.5 Z" fill="#b83c3c"/><path d="M9 1 L15 1 L15 8 L9 8 Z" fill="#e07474"/><path d="M10 1 L15 1 L15 5 L12 5 Z" fill="#ee8888"/><path d="M1 9.2 L15 9.2 L15 10.5 L1 10.5 Z" fill="#8a3020"/><path d="M6.5 10.5 L11.6 15.8" stroke="#000" stroke-width="1.1"/><circle cx="5.6" cy="5.6" r="4.7" fill="#2468c8"/><path d="M1.5 3.5 L3 1.6 L5 1.2 L5.5 2.6 L4 3.2 L3 4.6 Z" fill="#b8e020"/><path d="M4.2 5 L6.5 4.2 L8.3 5.2 L7.4 6.8 L6.2 7 L5.8 8.8 L4.8 7.4 Z" fill="#e8e040"/><path d="M8 1.8 L9.4 3 L8.6 3.6 Z" fill="#e8e040"/></svg>
<span class="ar" style="left:264.5px;top:144px;line-height:14px;color:#fff;font-size:12px;font-weight:bold;letter-spacing:0.131px">HS-Upload V1.37</span>
<div style="left:984px;top:144px;width:16px;height:14px;background:#E6D8AE;border:1px solid;border-color:#FDF8E6 #000000 #000000 #FDF8E6;box-shadow:inset -1px -1px 0 #B39A5E;"><div style="left:3px;top:8px;width:6px;height:2px;background:#000"></div></div>
<div style="left:1000px;top:144px;width:16px;height:14px;background:#E6D8AE;border:1px solid;border-color:#FDF8E6 #000000 #000000 #FDF8E6;box-shadow:inset -1px -1px 0 #B39A5E;"><div style="left:2px;top:1px;width:9px;height:9px;border:1px solid #000;border-top-width:2px"></div></div>
<div style="left:1018px;top:144px;width:16px;height:14px;background:#E6D8AE;border:1px solid;border-color:#FDF8E6 #000000 #000000 #FDF8E6;box-shadow:inset -1px -1px 0 #B39A5E;"><svg style="position:absolute;left:3px;top:2px" width="8" height="7" shape-rendering="crispEdges"><path d="M0 0 L2 0 L8 7 L6 7 Z M6 0 L8 0 L2 7 L0 7 Z" fill="#000"/></svg></div>
<span class="ms" style="left:250.3px;top:163px;line-height:14px;;letter-spacing:-0.098px">Datei</span>
<span class="ms" style="left:286.5px;top:163px;line-height:14px;;letter-spacing:-0.070px">Verzeichnis</span>
<span class="ms" style="left:352.9px;top:163px;line-height:14px;;letter-spacing:-0.212px">Einstellungen</span>
<span class="ms" style="left:428.5px;top:163px;line-height:14px;;letter-spacing:-0.132px">Projekte</span>
<span class="ms" style="left:479.2px;top:163px;line-height:14px;;letter-spacing:-0.296px">FTP-Client</span>
<span class="ms" style="left:540.5px;top:163px;line-height:14px;;letter-spacing:-0.203px">Hilfe</span>
<div style="left:250px;top:182px;width:177px;height:19px;background:#fff;border:1px solid;border-color:#B39A5E #FDF8E6 #FDF8E6 #B39A5E;box-shadow:inset 1px 1px 0 #000000, inset -1px -1px 0 #E6D8AE;"></div>
<span class="ms" style="left:255px;top:184.3px;line-height:14px;">WSWin</span>
<div style="left:412px;top:184px;width:13px;height:15px;background:#E6D8AE;border:1px solid;border-color:#FDF8E6 #000000 #000000 #FDF8E6;box-shadow:inset -1px -1px 0 #B39A5E;"><svg width="5" height="3" style="position:absolute;left:50%;top:50%;margin-left:-2.5px;margin-top:-1.5px" shape-rendering="crispEdges"><polygon points="0,0 5,0 2.5,3" fill="#000"/></svg></div>
<span class="ar" style="left:497.5px;top:183px;line-height:18px;font-size:16px;font-weight:bold;letter-spacing:0.109px">WSWin</span>
<span class="ms" style="left:874.5px;top:183.5px;line-height:14px;;letter-spacing:-0.110px">Zeit f&uuml;r Abbruch (Sekunden)</span>
<div style="left:1012px;top:180px;width:28px;height:20px;background:#fff;border:1px solid;border-color:#B39A5E #FDF8E6 #FDF8E6 #B39A5E;box-shadow:inset 1px 1px 0 #000000, inset -1px -1px 0 #E6D8AE;"></div>
<span class="ms" style="left:1020.5px;top:183.5px;line-height:14px;">3</span>
<div style="left:250px;top:204px;width:140px;height:25px;background:#E6D8AE;border:1px solid;border-color:#FDF8E6 #000000 #000000 #FDF8E6;box-shadow:inset -1px -1px 0 #B39A5E;"></div>
<svg style="position:absolute;left:261px;top:208px" width="14" height="18" shape-rendering="crispEdges"><path d="M2 4 L6 1 L13 1 L13 13 L10 17 L2 17 Z" fill="#000"/><path d="M3 4 L6.5 2 L12 2 L9.5 4 Z" fill="#f0f000"/><rect x="6" y="2" width="1" height="1" fill="#808000"/><rect x="8" y="2" width="1" height="1" fill="#808000"/><rect x="10" y="2" width="1" height="1" fill="#808000"/><path d="M10 5 L12.5 2.5 L12.5 12.5 L10 15.5 Z" fill="#808000"/><rect x="3" y="5" width="7" height="11" fill="#c8c8c8"/><rect x="4" y="5" width="4" height="2" fill="#ffffff"/><rect x="0" y="7" width="8" height="5" fill="#000"/><rect x="1" y="8" width="6" height="3" fill="#ffff00"/><rect x="3" y="9" width="3" height="1" fill="#000"/><rect x="3" y="12" width="7" height="4" fill="#000"/><rect x="4" y="12" width="5" height="3" fill="#ffff00"/><rect x="5" y="12" width="3" height="1" fill="#000"/><rect x="5" y="13" width="3" height="1" fill="#c8c8c8"/><path d="M10 16 L12.5 13.5 L13 14.5 L11 17 Z" fill="#e0e0e0"/></svg>
<span class="th" style="left:279.5px;top:209.5px;line-height:14px;;letter-spacing:-0.379px"><u>L</u>okale Auswahl lesen</span>
<div style="left:250px;top:230px;width:140px;height:25px;background:#E6D8AE;border:1px solid;border-color:#FDF8E6 #000000 #000000 #FDF8E6;box-shadow:inset -1px -1px 0 #B39A5E;"></div>
<svg style="position:absolute;left:260px;top:235px" width="16" height="17" shape-rendering="crispEdges"><path d="M13 0 L16 0 L16 16 L0 16 L0 14.5 L7.5 7.5 L13 7.5 Z" fill="#fff"/><rect x="0" y="1" width="6" height="6" fill="#000"/><rect x="1" y="2" width="4" height="4" fill="#00ffff"/><path d="M9 1 L13 1 L13 5 L15.5 5 L12 8.8 L8.5 5 L11 5 L11 2.5 L9 2.5 Z" fill="#000"/><circle cx="7.6" cy="9.6" r="2.6" fill="#000" shape-rendering="auto"/><circle cx="7.6" cy="9.6" r="1.7" fill="#ffff30" shape-rendering="auto"/><path d="M2 16 L5.5 11.5 L9 16 Z" fill="#000"/><path d="M3.3 15.3 L5.5 12.6 L7.7 15.3 Z" fill="#0000f0"/><rect x="10.5" y="11" width="5.5" height="5" fill="#000"/><rect x="11.5" y="12" width="4" height="3.5" fill="#ff0000"/></svg>
<span class="th" style="left:278px;top:235.5px;line-height:14px;;letter-spacing:-0.327px"><u>N</u>eue Dateien senden</span>
<div style="left:391px;top:204px;width:141px;height:25px;background:#E6D8AE;border:1px solid;border-color:#FDF8E6 #000000 #000000 #FDF8E6;box-shadow:inset -1px -1px 0 #B39A5E;"></div>
<svg style="position:absolute;left:417px;top:208px" width="18" height="17"><path d="M1.2 8.4 L3.6 7.2 L7 11.2 L13.6 2.8 L16.8 1.6 L12 7.2 L7.2 15.2 L5.6 15.2 Z" fill="#f00000"/><path d="M16.8 1.6 L12.4 7.4 L7.6 15.4" stroke="#400" stroke-width="0.7" fill="none" opacity=".7"/></svg>
<span class="th" style="left:437.5px;top:209.5px;line-height:14px;;letter-spacing:-0.331px">Alle <u>m</u>arkieren</span>
<div style="left:391px;top:230px;width:141px;height:25px;background:#E6D8AE;border:1px solid;border-color:#FDF8E6 #000000 #000000 #FDF8E6;box-shadow:inset -1px -1px 0 #B39A5E;"></div>
<svg style="position:absolute;left:411px;top:234px" width="18" height="18"><circle cx="8.5" cy="8.6" r="6.5" fill="none" stroke="#ff0000" stroke-width="2"/><line x1="4.2" y1="13" x2="12.8" y2="4.2" stroke="#ff0000" stroke-width="2"/></svg>
<span class="th" style="left:431.5px;top:235.5px;line-height:14px;;letter-spacing:-0.350px">Alle <u>d</u>emarkieren</span>
<div style="left:533px;top:204px;width:140px;height:49px;background:#000;overflow:hidden;border-right:1px solid #C8AA58;border-bottom:1px solid #C8AA58"><div style="left:54px;top:11px;width:48px;height:19px;border-radius:50%;background:radial-gradient(ellipse at 45% 55%,#3f6cb4 0%,#2b4c8a 35%,#1b2b50 62%,rgba(0,0,0,0) 100%)"></div><div style="left:78px;top:16px;width:20px;height:7px;border-radius:50%;background:radial-gradient(ellipse,#93a4bc 0%,rgba(60,80,110,0) 80%)"></div><div style="left:60px;top:20px;width:14px;height:6px;border-radius:50%;background:radial-gradient(ellipse,#8a9060 0%,rgba(60,80,60,0) 80%)"></div><div style="left:110px;top:1px;width:30px;height:12px;background:radial-gradient(ellipse at 60% 30%,#5a6880 0%,rgba(0,0,0,0) 70%)"></div><div style="left:2px;top:25.5px;width:13px;height:4px;border-radius:50%;background:radial-gradient(ellipse,#d890a8 0%,#80405a 50%,rgba(0,0,0,0) 100%)"></div><div style="left:117px;top:34.5px;width:14px;height:6px;border-radius:50%;background:radial-gradient(ellipse,#f49058 0%,#e07848 45%,rgba(120,40,20,0) 100%)"></div><div style="left:17px;top:37px;width:2px;height:1px;background:#bbb"></div></div>
<span class="ar" style="left:503px;top:210.3px;width:200px;text-align:center;line-height:14px;color:#f2f2f2;font-size:13px;letter-spacing:0.75px">Copyright</span>
<span class="ar" style="left:554.5px;top:227px;line-height:24px;color:#ff0000;font-size:22px;font-weight:bold;letter-spacing:0.553px">OE3BSB</span>
<div style="left:674px;top:204px;width:145px;height:25px;background:#E6D8AE;border:1px solid;border-color:#FDF8E6 #000000 #000000 #FDF8E6;box-shadow:inset -1px -1px 0 #B39A5E;"></div>
<svg style="position:absolute;left:689px;top:208px" width="18" height="18"><path d="M1 4.5 L3 2.2 L8 0.8 L10.5 1 L7 3 L5 6 L3.5 4.5 L2 5.5 Z" fill="#000"/><path d="M4.5 2.5 L17 16.5" stroke="#808000" stroke-width="2.2"/><path d="M16 14 L17.4 17" stroke="#000" stroke-width="1"/><rect x="12.5" y="1.8" width="1.6" height="9" fill="#000"/><rect x="13.1" y="2.6" width="0.6" height="2.4" fill="#888"/><path d="M10.8 10 L16.2 10 L16.2 11.6 L15 11.6 L15 17 L12 17 L12 11.6 L10.8 11.6 Z" fill="#ff0000"/><rect x="13.2" y="11.6" width="0.7" height="5.4" fill="#900"/><path d="M1.2 9 A3 3 0 1 0 5.8 12.2 L9.2 16.6 L7.6 17 L4.2 13.6" fill="#fff" stroke="#000" stroke-width="1.1"/><circle cx="3.4" cy="10.6" r="1.1" fill="#e6d8ae" stroke="#000" stroke-width="0.8"/></svg>
<span class="th" style="left:709.5px;top:209.5px;line-height:14px;;letter-spacing:-0.131px"><u>P</u>rojekte bearbeiten</span>
<div style="left:674px;top:230px;width:145px;height:25px;background:#E6D8AE;border:1px solid;border-color:#FDF8E6 #000000 #000000 #FDF8E6;box-shadow:inset -1px -1px 0 #B39A5E;"></div>
<svg style="position:absolute;left:694px;top:235px" width="16" height="17" shape-rendering="crispEdges"><path d="M13 0 L16 0 L16 16 L0 16 L0 14.5 L7.5 7.5 L13 7.5 Z" fill="#fff"/><rect x="8" y="1" width="5" height="5" fill="#000"/><rect x="9" y="2" width="3" height="3" fill="#f0e8c8"/><rect x="5" y="0.5" width="5.5" height="5" fill="#000"/><rect x="6" y="1.5" width="3.5" height="3" fill="#00ffff"/><rect x="2.5" y="2.5" width="5.5" height="5" fill="#000"/><rect x="3.5" y="3.5" width="3.5" height="3" fill="#00ffff"/><rect x="0" y="4.5" width="5.5" height="5" fill="#000"/><rect x="1" y="5.5" width="3.5" height="3" fill="#00ffff"/><path d="M9 1 L13 1 L13 5 L15.5 5 L12 8.8 L8.5 5 L11 5 L11 2.5 L9 2.5 Z" fill="#000"/><circle cx="7.6" cy="9.6" r="2.6" fill="#000" shape-rendering="auto"/><circle cx="7.6" cy="9.6" r="1.7" fill="#ffff30" shape-rendering="auto"/><path d="M2 16 L5.5 11.5 L9 16 Z" fill="#000"/><path d="M3.3 15.3 L5.5 12.6 L7.7 15.3 Z" fill="#0000f0"/><rect x="10.5" y="11" width="5.5" height="5" fill="#000"/><rect x="11.5" y="12" width="4" height="3.5" fill="#ff0000"/></svg>
<span class="th" style="left:713.5px;top:235.5px;line-height:14px;;letter-spacing:-0.248px"><u>F</u>TP-Client starten</span>
<div style="left:821px;top:204px;width:220px;height:52px;border:1px solid #B39A5E;box-shadow:inset 1px 1px 0 #FDF8E6, 1px 1px 0 #FDF8E6"></div>
<span class="ms" style="left:826.5px;top:206px;line-height:14px;;letter-spacing:-0.247px">Internetverbindung immer trennen</span>
<div style="left:1012px;top:206.5px;width:12px;height:12px;border-radius:6px;background:#fff;border:1px solid;border-color:#B39A5E #FDF8E6 #FDF8E6 #B39A5E;box-shadow:inset 1px 1px 0 #000"><div style="left:3px;top:3px;width:4px;height:4px;border-radius:2px;background:#000"></div></div>
<span class="ms" style="left:826.5px;top:222px;line-height:14px;;letter-spacing:-0.121px">Trennen, wenn keine Verbindung war</span>
<div style="left:1012px;top:222.5px;width:12px;height:12px;border-radius:6px;background:#fff;border:1px solid;border-color:#B39A5E #FDF8E6 #FDF8E6 #B39A5E;box-shadow:inset 1px 1px 0 #000"></div>
<span class="ms" style="left:826.5px;top:238px;line-height:14px;;letter-spacing:-0.165px">Internetverbindung nie trennen</span>
<div style="left:1012px;top:238.5px;width:12px;height:12px;border-radius:6px;background:#fff;border:1px solid;border-color:#B39A5E #FDF8E6 #FDF8E6 #B39A5E;box-shadow:inset 1px 1px 0 #000"></div>
<span class="vb" style="left:252.5px;top:261px;line-height:14px;;letter-spacing:-0.029px;transform-origin:0 50%">Lokal:</span>
<span class="vb" style="left:253px;top:275.5px;line-height:14px;;letter-spacing:0.475px;transform-origin:0 50%">Verz.:</span>
<span class="ms" style="left:301.8px;top:262px;line-height:14px;;letter-spacing:-0.085px">4317 Dateien (69.287.910 Byte)</span>
<span class="ms" style="left:301.8px;top:276.5px;line-height:14px;;letter-spacing:-0.249px">C:\Programme\WsWin\HTML\</span>
<span class="vb" style="left:642.5px;top:261.6px;line-height:14px;;letter-spacing:0.284px;transform-origin:0 50%">Server:</span>
<span class="vb" style="left:643px;top:276px;line-height:14px;;letter-spacing:0.475px;transform-origin:0 50%">Verz.:</span>
<span class="ms" style="left:700.8px;top:262px;line-height:14px;;letter-spacing:0.536px">www.dessau-web.de</span>
<span class="ms" style="left:700.8px;top:276.5px;line-height:14px;;letter-spacing:0.237px">/dessauwetter/wswin/2007</span>
<div style="left:250px;top:292px;width:388px;height:290px;background:#E6D8AE;border:1px solid;border-color:#B39A5E #FDF8E6 #FDF8E6 #B39A5E;box-shadow:inset 1px 1px 0 #000000, inset -1px -1px 0 #E6D8AE;"></div>
<div style="left:252px;top:294px;width:372px;height:274px;background:#fff"></div>
<div style="left:252px;top:294px;width:26px;height:17px;background:#E6D8AE;border:1px solid;border-color:#FDF8E6 #000000 #000000 #FDF8E6;box-shadow:inset -1px -1px 0 #B39A5E;"><span class="ms" style="left:2px;top:1.5px;line-height:13px">Neu</span></div>
<div style="left:278px;top:294px;width:129px;height:17px;background:#E6D8AE;border:1px solid;border-color:#FDF8E6 #000000 #000000 #FDF8E6;box-shadow:inset -1px -1px 0 #B39A5E;"><span class="ms" style="left:2px;top:1.5px;line-height:13px">Datei-Name</span></div>
<div style="left:407px;top:294px;width:144px;height:17px;background:#E6D8AE;border:1px solid;border-color:#FDF8E6 #000000 #000000 #FDF8E6;box-shadow:inset -1px -1px 0 #B39A5E;"><span class="ms" style="left:2px;top:1.5px;line-height:13px">Lokales Verzeichnis</span></div>
<div style="left:551px;top:294px;width:66px;height:17px;background:#E6D8AE;border:1px solid;border-color:#FDF8E6 #000000 #000000 #FDF8E6;box-shadow:inset -1px -1px 0 #B39A5E;"><span class="ms" style="right:1px;top:1.5px;line-height:13px">Bytes</span></div>
<div style="left:617px;top:294px;width:6px;height:17px;overflow:hidden"><div style="left:0;top:0;width:24px;height:17px;background:#E6D8AE;border:1px solid;border-color:#FDF8E6 #000000 #000000 #FDF8E6"><span class="ms" style="left:2px;top:1.5px;line-height:13px">D</span></div></div>
<div style="left:252px;top:327px;width:372px;height:1px;background:#C0C0C0"></div>
<span class="ms" style="left:280px;top:312.5px;line-height:14px;">mini_20070109r.gif</span>
<div style="left:409px;top:311px;width:141px;height:16px;overflow:hidden;position:absolute"><span class="ms" style="left:0;top:1.5px;line-height:14px;letter-spacing:0.02px">C:\Programme\WsWin\HTML\</span></div>
<span class="ms" style="right:409px;top:312.5px;line-height:14px;">4027</span>
<span class="ms" style="left:619.5px;top:312.5px;line-height:14px;">0</span>
<div style="left:252px;top:344px;width:372px;height:1px;background:#C0C0C0"></div>
<span class="ms" style="left:280px;top:329.5px;line-height:14px;">mini_20070109t.gif</span>
<div style="left:409px;top:328px;width:141px;height:16px;overflow:hidden;position:absolute"><span class="ms" style="left:0;top:1.5px;line-height:14px;letter-spacing:0.02px">C:\Programme\WsWin\HTML\</span></div>
<span class="ms" style="right:409px;top:329.5px;line-height:14px;">5188</span>
<span class="ms" style="left:619.5px;top:329.5px;line-height:14px;">0</span>
<div style="left:252px;top:361px;width:372px;height:1px;background:#C0C0C0"></div>
<span class="ms" style="left:280px;top:346.5px;line-height:14px;">mini_20070109tp.gif</span>
<div style="left:409px;top:345px;width:141px;height:16px;overflow:hidden;position:absolute"><span class="ms" style="left:0;top:1.5px;line-height:14px;letter-spacing:0.02px">C:\Programme\WsWin\HTML\</span></div>
<span class="ms" style="right:409px;top:346.5px;line-height:14px;">4444</span>
<span class="ms" style="left:619.5px;top:346.5px;line-height:14px;">0</span>
<div style="left:252px;top:378px;width:372px;height:1px;background:#C0C0C0"></div>
<span class="ms" style="left:280px;top:363.5px;line-height:14px;">mini_20070109w.gif</span>
<div style="left:409px;top:362px;width:141px;height:16px;overflow:hidden;position:absolute"><span class="ms" style="left:0;top:1.5px;line-height:14px;letter-spacing:0.02px">C:\Programme\WsWin\HTML\</span></div>
<span class="ms" style="right:409px;top:363.5px;line-height:14px;">6046</span>
<span class="ms" style="left:619.5px;top:363.5px;line-height:14px;">0</span>
<div style="left:252px;top:395px;width:372px;height:1px;background:#C0C0C0"></div>
<span class="ms" style="left:280px;top:380.5px;line-height:14px;">mini_20070109w10.gif</span>
<div style="left:409px;top:379px;width:141px;height:16px;overflow:hidden;position:absolute"><span class="ms" style="left:0;top:1.5px;line-height:14px;letter-spacing:0.02px">C:\Programme\WsWin\HTML\</span></div>
<span class="ms" style="right:409px;top:380.5px;line-height:14px;">4412</span>
<span class="ms" style="left:619.5px;top:380.5px;line-height:14px;">0</span>
<div style="left:252px;top:412px;width:372px;height:1px;background:#C0C0C0"></div>
<span class="ms" style="left:280px;top:397.5px;line-height:14px;">mini_20070109wb.gif</span>
<div style="left:409px;top:396px;width:141px;height:16px;overflow:hidden;position:absolute"><span class="ms" style="left:0;top:1.5px;line-height:14px;letter-spacing:0.02px">C:\Programme\WsWin\HTML\</span></div>
<span class="ms" style="right:409px;top:397.5px;line-height:14px;">4310</span>
<span class="ms" style="left:619.5px;top:397.5px;line-height:14px;">0</span>
<div style="left:252px;top:429px;width:372px;height:1px;background:#C0C0C0"></div>
<span class="ms" style="left:280px;top:414.5px;line-height:14px;">mini_20070109wc.gif</span>
<div style="left:409px;top:413px;width:141px;height:16px;overflow:hidden;position:absolute"><span class="ms" style="left:0;top:1.5px;line-height:14px;letter-spacing:0.02px">C:\Programme\WsWin\HTML\</span></div>
<span class="ms" style="right:409px;top:414.5px;line-height:14px;">4802</span>
<span class="ms" style="left:619.5px;top:414.5px;line-height:14px;">0</span>
<div style="left:252px;top:446px;width:372px;height:1px;background:#C0C0C0"></div>
<span class="ms" style="left:280px;top:431.5px;line-height:14px;">mini_20070109wdg.gif</span>
<div style="left:409px;top:430px;width:141px;height:16px;overflow:hidden;position:absolute"><span class="ms" style="left:0;top:1.5px;line-height:14px;letter-spacing:0.02px">C:\Programme\WsWin\HTML\</span></div>
<span class="ms" style="right:409px;top:431.5px;line-height:14px;">4121</span>
<span class="ms" style="left:619.5px;top:431.5px;line-height:14px;">0</span>
<div style="left:252px;top:463px;width:372px;height:1px;background:#C0C0C0"></div>
<span class="ms" style="left:280px;top:448.5px;line-height:14px;">mini_20070109wr.gif</span>
<div style="left:409px;top:447px;width:141px;height:16px;overflow:hidden;position:absolute"><span class="ms" style="left:0;top:1.5px;line-height:14px;letter-spacing:0.02px">C:\Programme\WsWin\HTML\</span></div>
<span class="ms" style="right:409px;top:448.5px;line-height:14px;">4597</span>
<span class="ms" style="left:619.5px;top:448.5px;line-height:14px;">0</span>
<div style="left:252px;top:480px;width:372px;height:1px;background:#C0C0C0"></div>
<span class="ms" style="left:280px;top:465.5px;line-height:14px;">mini_20070109xt.gif</span>
<div style="left:409px;top:464px;width:141px;height:16px;overflow:hidden;position:absolute"><span class="ms" style="left:0;top:1.5px;line-height:14px;letter-spacing:0.02px">C:\Programme\WsWin\HTML\</span></div>
<span class="ms" style="right:409px;top:465.5px;line-height:14px;">4013</span>
<span class="ms" style="left:619.5px;top:465.5px;line-height:14px;">0</span>
<div style="left:252px;top:497px;width:372px;height:1px;background:#C0C0C0"></div>
<span class="ms" style="left:280px;top:482.5px;line-height:14px;">mini_20070110cl.gif</span>
<div style="left:409px;top:481px;width:141px;height:16px;overflow:hidden;position:absolute"><span class="ms" style="left:0;top:1.5px;line-height:14px;letter-spacing:0.02px">C:\Programme\WsWin\HTML\</span></div>
<span class="ms" style="right:409px;top:482.5px;line-height:14px;">8538</span>
<span class="ms" style="left:619.5px;top:482.5px;line-height:14px;">1</span>
<div style="left:252px;top:514px;width:372px;height:1px;background:#C0C0C0"></div>
<span class="ms" style="left:280px;top:499.5px;line-height:14px;">mini_20070110d.gif</span>
<div style="left:409px;top:498px;width:141px;height:16px;overflow:hidden;position:absolute"><span class="ms" style="left:0;top:1.5px;line-height:14px;letter-spacing:0.02px">C:\Programme\WsWin\HTML\</span></div>
<span class="ms" style="right:409px;top:499.5px;line-height:14px;">4447</span>
<span class="ms" style="left:619.5px;top:499.5px;line-height:14px;">0</span>
<div style="left:252px;top:531px;width:372px;height:1px;background:#C0C0C0"></div>
<span class="ms" style="left:280px;top:516.5px;line-height:14px;">mini_20070110f.gif</span>
<div style="left:409px;top:515px;width:141px;height:16px;overflow:hidden;position:absolute"><span class="ms" style="left:0;top:1.5px;line-height:14px;letter-spacing:0.02px">C:\Programme\WsWin\HTML\</span></div>
<span class="ms" style="right:409px;top:516.5px;line-height:14px;">5277</span>
<span class="ms" style="left:619.5px;top:516.5px;line-height:14px;">0</span>
<div style="left:252px;top:548px;width:372px;height:1px;background:#C0C0C0"></div>
<span class="ms" style="left:280px;top:533.5px;line-height:14px;">mini_20070110r.gif</span>
<div style="left:409px;top:532px;width:141px;height:16px;overflow:hidden;position:absolute"><span class="ms" style="left:0;top:1.5px;line-height:14px;letter-spacing:0.02px">C:\Programme\WsWin\HTML\</span></div>
<span class="ms" style="right:409px;top:533.5px;line-height:14px;">4146</span>
<span class="ms" style="left:619.5px;top:533.5px;line-height:14px;">0</span>
<div style="left:252px;top:549px;width:372px;height:16px;background:#C6A449"></div>
<div style="left:252px;top:565px;width:372px;height:1px;background:#C0C0C0"></div>
<span class="ms" style="left:259px;top:550.5px;line-height:14px;">+</span>
<span class="ms" style="left:280px;top:550.5px;line-height:14px;">mini_20070110t.gif</span>
<div style="left:409px;top:549px;width:141px;height:16px;overflow:hidden;position:absolute"><span class="ms" style="left:0;top:1.5px;line-height:14px;letter-spacing:0.02px">C:\Programme\WsWin\HTML\</span></div>
<span class="ms" style="right:409px;top:550.5px;line-height:14px;">5352</span>
<span class="ms" style="left:619.5px;top:550.5px;line-height:14px;">0</span>
<div style="left:277px;top:311px;width:1px;height:257px;background:#C0C0C0"></div>
<div style="left:406px;top:311px;width:1px;height:257px;background:#C0C0C0"></div>
<div style="left:550px;top:311px;width:1px;height:257px;background:#C0C0C0"></div>
<div style="left:616px;top:311px;width:1px;height:257px;background:#C0C0C0"></div>
<div style="left:252px;top:549px;width:372px;height:16px;border:1px dotted #4a4a80"></div>
<div style="left:623px;top:294px;width:14px;height:274px;background:#F2EAD2"></div>
<div style="left:623px;top:294px;width:13px;height:13px;background:#E6D8AE;border:1px solid;border-color:#FDF8E6 #000000 #000000 #FDF8E6;box-shadow:inset -1px -1px 0 #B39A5E;"><svg width="5" height="3" style="position:absolute;left:50%;top:50%;margin-left:-2.5px;margin-top:-1.5px" shape-rendering="crispEdges"><polygon points="0,3 5,3 2.5,0" fill="#000"/></svg></div>
<div style="left:623px;top:464px;width:13px;height:13px;background:#E6D8AE;border:1px solid;border-color:#FDF8E6 #000000 #000000 #FDF8E6;box-shadow:inset -1px -1px 0 #B39A5E;"></div>
<div style="left:623px;top:555px;width:13px;height:13px;background:#E6D8AE;border:1px solid;border-color:#FDF8E6 #000000 #000000 #FDF8E6;box-shadow:inset -1px -1px 0 #B39A5E;"><svg width="5" height="3" style="position:absolute;left:50%;top:50%;margin-left:-2.5px;margin-top:-1.5px" shape-rendering="crispEdges"><polygon points="0,0 5,0 2.5,3" fill="#000"/></svg></div>
<div style="left:252px;top:568px;width:372px;height:13px;background:#F2EAD2"></div>
<div style="left:252px;top:568px;width:13px;height:13px;background:#E6D8AE;border:1px solid;border-color:#FDF8E6 #000000 #000000 #FDF8E6;box-shadow:inset -1px -1px 0 #B39A5E;"><svg width="3" height="5" style="position:absolute;left:50%;top:50%;margin-left:-1.5px;margin-top:-2.5px" shape-rendering="crispEdges"><polygon points="3,0 3,5 0,2.5" fill="#000"/></svg></div>
<div style="left:265px;top:568px;width:13px;height:13px;background:#E6D8AE;border:1px solid;border-color:#FDF8E6 #000000 #000000 #FDF8E6;box-shadow:inset -1px -1px 0 #B39A5E;"></div>
<div style="left:611px;top:568px;width:13px;height:13px;background:#E6D8AE;border:1px solid;border-color:#FDF8E6 #000000 #000000 #FDF8E6;box-shadow:inset -1px -1px 0 #B39A5E;"><svg width="3" height="5" style="position:absolute;left:50%;top:50%;margin-left:-1.5px;margin-top:-2.5px" shape-rendering="crispEdges"><polygon points="0,0 0,5 3,2.5" fill="#000"/></svg></div>
<div style="left:624px;top:568px;width:13px;height:13px;background:#E6D8AE"></div>
<span class="ms" style="left:251.5px;top:585px;line-height:14px;;letter-spacing:-0.108px">202 Dateien zum Senden markiert (1.272.629 Bytes)</span>
<div style="left:642px;top:292px;width:398px;height:290px;background:#fff;border:1px solid;border-color:#B39A5E #FDF8E6 #FDF8E6 #B39A5E;box-shadow:inset 1px 1px 0 #000000, inset -1px -1px 0 #E6D8AE;"></div>
<div style="left:644px;top:294px;width:181px;height:17px;background:#E6D8AE;border:1px solid;border-color:#FDF8E6 #000000 #000000 #FDF8E6;box-shadow:inset -1px -1px 0 #B39A5E;"><span class="ms" style="left:2px;top:1.5px;line-height:13px">Name</span></div>
<div style="left:825px;top:294px;width:61px;height:17px;background:#E6D8AE;border:1px solid;border-color:#FDF8E6 #000000 #000000 #FDF8E6;box-shadow:inset -1px -1px 0 #B39A5E;"><span class="ms" style="right:1px;top:1.5px;line-height:13px">Bytes</span></div>
<div style="left:886px;top:294px;width:65px;height:17px;background:#E6D8AE;border:1px solid;border-color:#FDF8E6 #000000 #000000 #FDF8E6;box-shadow:inset -1px -1px 0 #B39A5E;"><span class="ms" style="left:0;right:0;text-align:center;top:1.5px;line-height:13px">Datum</span></div>
<div style="left:951px;top:294px;width:62px;height:17px;background:#E6D8AE;border:1px solid;border-color:#FDF8E6 #000000 #000000 #FDF8E6;box-shadow:inset -1px -1px 0 #B39A5E;"><span class="ms" style="left:2px;top:1.5px;line-height:13px">Attribute</span></div>
<div style="left:1013px;top:294px;width:20px;height:17px;background:#E6D8AE"></div>
<div style="left:644px;top:311px;width:369px;height:16px;background:#C6A449"></div>
<div style="left:824px;top:311px;width:1px;height:16px;background:#b8b8a0"></div>
<div style="left:885px;top:311px;width:1px;height:16px;background:#b8b8a0"></div>
<div style="left:950px;top:311px;width:1px;height:16px;background:#b8b8a0"></div>
<div style="left:564px;top:380px;width:169px;height:33px;background:#E6D8AE;border:1px solid;border-color:#FDF8E6 #000000 #000000 #FDF8E6;box-shadow:inset -1px -1px 0 #B39A5E;"></div>
<span class="ar" style="left:576.1px;top:388.5px;line-height:16px;color:#ff0000;font-size:13px;font-weight:bold;font-style:italic;letter-spacing:-0.051px">&Uuml;bertragung <u>a</u>bbrechen</span>
<div style="left:642px;top:583px;width:161px;height:25px;background:#E6D8AE;border:1px solid;border-color:#FDF8E6 #000000 #000000 #FDF8E6;box-shadow:inset -1px -1px 0 #B39A5E;"></div>
<svg style="position:absolute;left:654px;top:589px" width="16" height="16" shape-rendering="crispEdges"><rect x="6" y="0" width="4" height="2" fill="#000"/><rect x="5" y="2" width="6" height="2" fill="#000"/><rect x="6" y="2" width="4" height="1" fill="#fff"/><rect x="1" y="5" width="4" height="2" fill="#000"/><rect x="0" y="7" width="6" height="2" fill="#000"/><rect x="1" y="7" width="4" height="1" fill="#fff"/><rect x="11" y="5" width="4" height="2" fill="#000"/><rect x="10" y="7" width="6" height="2" fill="#000"/><rect x="11" y="7" width="4" height="1" fill="#fff"/><rect x="1" y="10" width="4" height="2" fill="#000"/><rect x="0" y="12" width="6" height="2" fill="#000"/><rect x="1" y="12" width="4" height="1" fill="#fff"/><rect x="11" y="10" width="4" height="2" fill="#000"/><rect x="10" y="12" width="6" height="2" fill="#000"/><rect x="11" y="12" width="4" height="1" fill="#fff"/><rect x="7" y="4" width="2" height="10" fill="#e00000"/><rect x="5" y="6" width="6" height="1" fill="#e00000"/><rect x="5" y="13" width="6" height="1" fill="#e00000"/></svg>
<span class="th" style="left:673.8px;top:588.5px;line-height:14px;;letter-spacing:-0.345px">Server-<u>V</u>erzeichnis lesen</span>
<div style="left:250px;top:608px;width:790px;height:95px;background:#fff;border:1px solid;border-color:#B39A5E #FDF8E6 #FDF8E6 #B39A5E;box-shadow:inset 1px 1px 0 #000000, inset -1px -1px 0 #E6D8AE;"></div>
<div style="left:252px;top:610px;width:763px;height:13px;background:#C6A449"></div>
<span class="ms" style="left:254.5px;top:609.8px;line-height:14px;color:#ff0000;font-size:12px;letter-spacing:-1.272px">-&gt;&gt;</span>
<span class="ms" style="left:272.9px;top:609.5px;line-height:14px;color:#ff0000;letter-spacing:-0.107px">01.05.2007 21:07:46</span>
<span class="ms" style="left:380.5px;top:609.5px;line-height:14px;color:#ff0000;letter-spacing:-0.203px">Transfer complete</span>
<span class="ms" style="left:254.5px;top:622.8px;line-height:14px;color:#0000ff;font-size:12px;letter-spacing:-1.272px">&lt;&lt;-</span>
<span class="ms" style="left:272.9px;top:622.5px;line-height:14px;color:#0000ff;letter-spacing:-0.107px">01.05.2007 21:07:46</span>
<span class="ms" style="left:380.5px;top:622.5px;line-height:14px;color:#0000ff;letter-spacing:-0.053px">C:\Programme\WsWin\HTML\2007\mini_20070101r.gif erfolgreich gesendet</span>
<span class="ms" style="left:254.5px;top:635.8px;line-height:14px;color:#ff0000;font-size:12px;letter-spacing:-1.272px">-&gt;&gt;</span>
<span class="ms" style="left:272.9px;top:635.5px;line-height:14px;color:#ff0000;letter-spacing:-0.107px">01.05.2007 21:07:46</span>
<span class="ms" style="left:380.5px;top:635.5px;line-height:14px;color:#ff0000;letter-spacing:-0.233px">Starting FTP transfer</span>
<span class="ms" style="left:254.5px;top:648.8px;line-height:14px;color:#ff0000;font-size:12px;letter-spacing:-1.272px">-&gt;&gt;</span>
<span class="ms" style="left:272.9px;top:648.5px;line-height:14px;color:#ff0000;letter-spacing:-0.107px">01.05.2007 21:07:46</span>
<span class="ms" style="left:380.5px;top:648.5px;line-height:14px;color:#ff0000;letter-spacing:-0.203px">Transfer complete</span>
<span class="ms" style="left:254.5px;top:661.8px;line-height:14px;color:#0000ff;font-size:12px;letter-spacing:-1.272px">&lt;&lt;-</span>
<span class="ms" style="left:272.9px;top:661.5px;line-height:14px;color:#0000ff;letter-spacing:-0.107px">01.05.2007 21:07:47</span>
<span class="ms" style="left:380.5px;top:661.5px;line-height:14px;color:#0000ff;letter-spacing:-0.053px">C:\Programme\WsWin\HTML\2007\mini_20070101t.gif erfolgreich gesendet</span>
<span class="ms" style="left:254.5px;top:674.8px;line-height:14px;color:#ff0000;font-size:12px;letter-spacing:-1.272px">-&gt;&gt;</span>
<span class="ms" style="left:272.9px;top:674.5px;line-height:14px;color:#ff0000;letter-spacing:-0.107px">01.05.2007 21:07:47</span>
<span class="ms" style="left:380.5px;top:674.5px;line-height:14px;color:#ff0000;letter-spacing:-0.233px">Starting FTP transfer</span>
<span class="ms" style="left:254.5px;top:687.8px;line-height:14px;color:#ff0000;font-size:12px;letter-spacing:-1.272px">-&gt;&gt;</span>
<span class="ms" style="left:272.9px;top:687.5px;line-height:14px;color:#ff0000;letter-spacing:-0.107px">01.05.2007 21:07:47</span>
<span class="ms" style="left:380.5px;top:687.5px;line-height:14px;color:#ff0000;letter-spacing:-0.203px">Transfer complete</span>
<div style="left:1015px;top:610px;width:20px;height:91px;background:#F2EAD2"></div>
<div style="left:1015px;top:610px;width:16px;height:12px;background:#E6D8AE;border:1px solid;border-color:#FDF8E6 #000000 #000000 #FDF8E6;box-shadow:inset -1px -1px 0 #B39A5E;"><svg width="5" height="3" style="position:absolute;left:50%;top:50%;margin-left:-2.5px;margin-top:-1.5px" shape-rendering="crispEdges"><polygon points="0,3 5,3 2.5,0" fill="#000"/></svg></div>
<div style="left:1015px;top:622px;width:16px;height:7px;background:#E6D8AE;border:1px solid;border-color:#FDF8E6 #000000 #000000 #FDF8E6;box-shadow:inset -1px -1px 0 #B39A5E;"></div>
<div style="left:1015px;top:689px;width:16px;height:12px;background:#E6D8AE;border:1px solid;border-color:#FDF8E6 #000000 #000000 #FDF8E6;box-shadow:inset -1px -1px 0 #B39A5E;"><svg width="5" height="3" style="position:absolute;left:50%;top:50%;margin-left:-2.5px;margin-top:-1.5px" shape-rendering="crispEdges"><polygon points="0,0 5,0 2.5,3" fill="#000"/></svg></div>
<div style="left:250px;top:703px;width:671px;height:12px;background:#0000ff"></div>
<span class="ar" style="left:627.8px;top:703.3px;line-height:12px;color:#ffff00;letter-spacing:0.723px">86%</span>
<div style="left:250px;top:718px;width:642px;height:16px;border:1px solid;border-color:#B39A5E #FDF8E6 #FDF8E6 #B39A5E"></div>
<div style="left:894px;top:718px;width:150px;height:16px;border:1px solid;border-color:#B39A5E #FDF8E6 #FDF8E6 #B39A5E"></div>
<span class="ar" style="left:361.9px;top:718px;line-height:16px;font-size:14px;letter-spacing:-0.487px">240 - C:\Programme\WsWin\HTML\2007\mini_20070110t.gif - 5352 Bytes</span>
<span class="ar" style="left:931.7px;top:718px;line-height:16px;font-size:14px;letter-spacing:-0.596px">22,77 kB/s</span>
</div></body></html>
